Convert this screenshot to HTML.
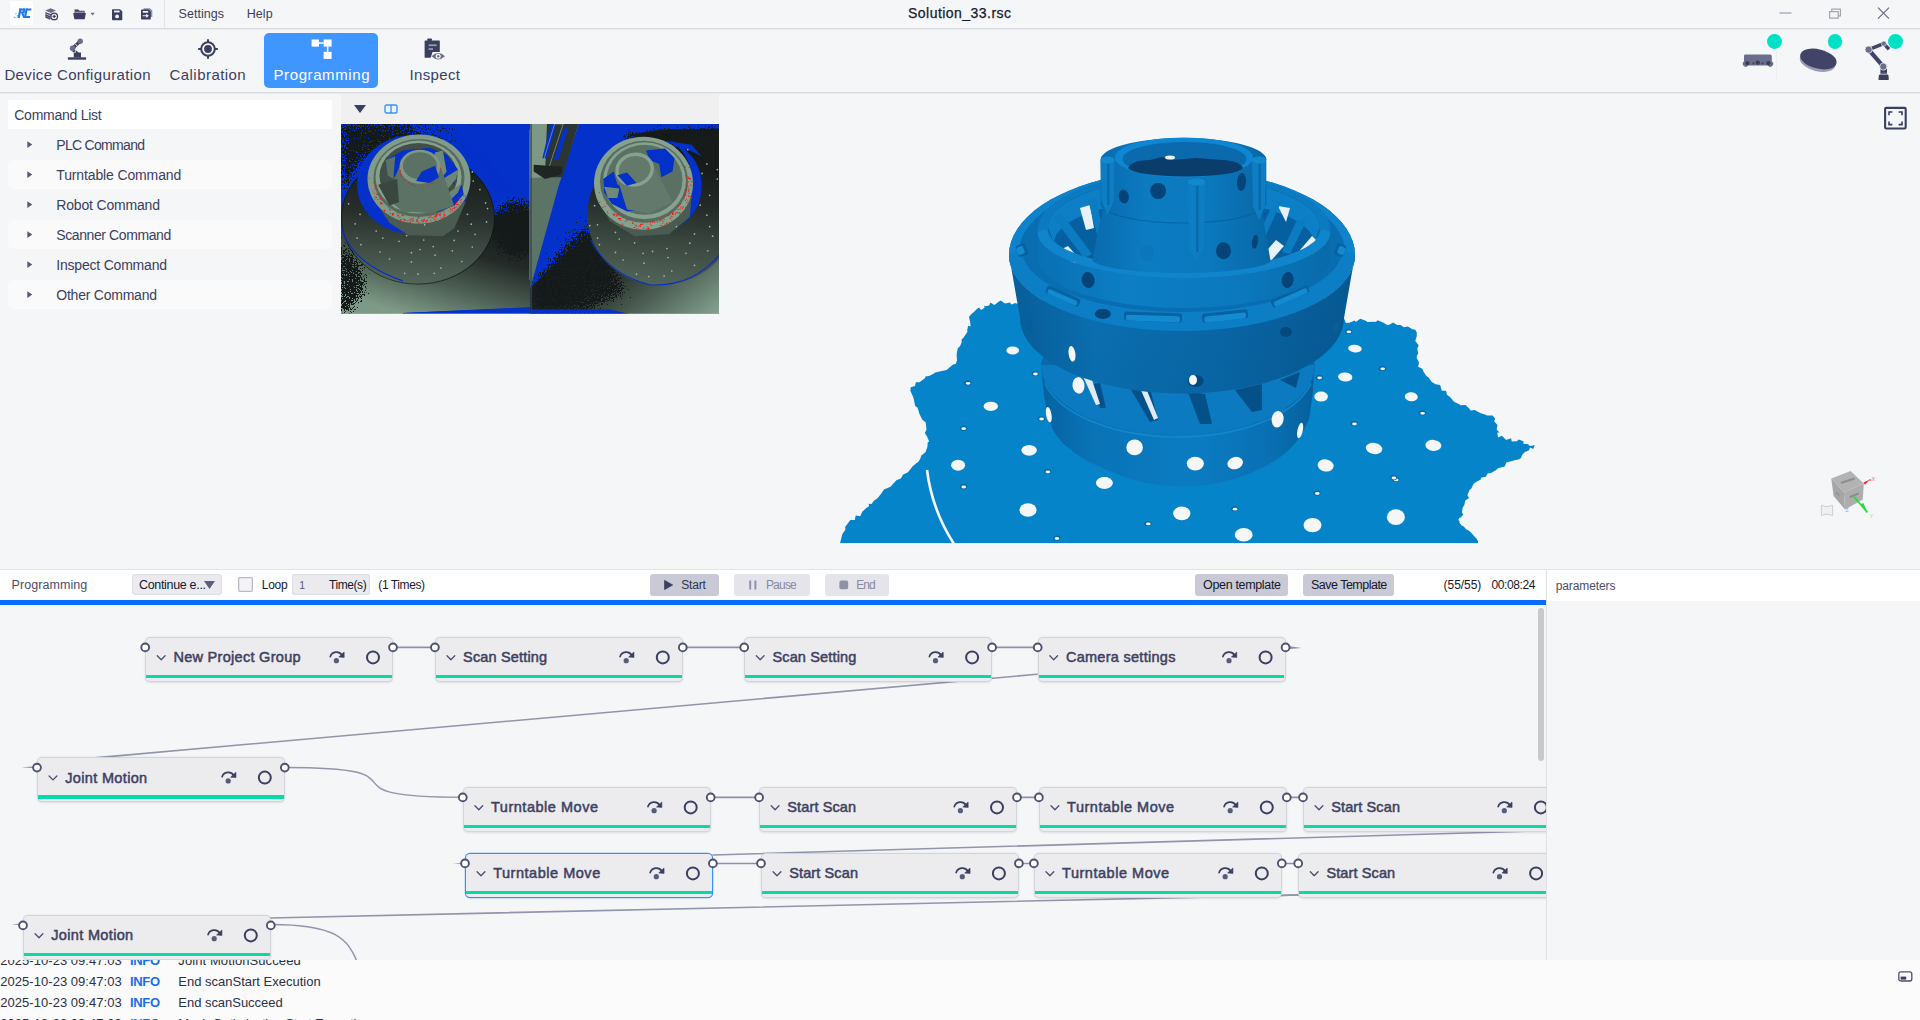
<!DOCTYPE html>
<html><head><meta charset="utf-8"><title>Solution_33.rsc</title>
<style>
html,body{margin:0;padding:0;}
body{width:1920px;height:1020px;overflow:hidden;background:#f5f6f8;position:relative;font-family:"Liberation Sans",sans-serif;}
.t{position:absolute;white-space:nowrap;}
.r{position:absolute;}
svg{position:absolute;overflow:visible;}
</style></head><body>
<div class="r" style="left:0px;top:28px;width:1920px;height:1px;background:#dcdde3;"></div>
<div class="r" style="left:0px;top:29px;width:1920px;height:1px;background:#e9eaee;"></div>
<div class="r" style="left:164px;top:0px;width:1px;height:28px;background:#e2e3e8;"></div>
<div class="r" style="left:10px;top:1px;width:23px;height:24px;background:#ffffff;border-radius:2px;"></div>
<svg style="left:12.5px;top:8px" width="19" height="11" viewBox="0 0 19 11"><g fill="#1a7bf3"><path d="M4.6,10 H6.8 L8.6,0.6 H6.4 Z"/><path d="M6.4,0.6 H12.3 L11.9,2.5 H6 Z"/><path d="M10.3,0.6 H12.3 L11.5,5.3 H9.5 Z"/><path d="M7.2,3.6 H11.6 L11.3,5.3 H6.9 Z"/><path d="M8.2,5.2 H10.4 L12.6,10 H10.4 Z"/><path d="M13.2,0.6 H18.5 L18.2,2.5 H12.9 Z"/><path d="M12.6,0.6 H14.8 L13,10 H10.8 Z"/><path d="M11,8.1 H17.2 L16.9,10 H10.6 Z"/></g><path d="M0.8,8.2 L3.6,10 H0.6 Z M2.4,5 L4.6,5.6 L2,6.6 Z" fill="#9fb4d6"/><path d="M3.6,7 L5.2,7.4 L4.4,9 Z" fill="#5b9bf2"/></svg>
<svg style="left:45px;top:7.6px" width="13" height="12" viewBox="0 0 13 12"><path d="M5.6,0.3 L11,2.6 L5.6,5 L0.3,2.6 Z" fill="#6b6e8a"/><path d="M0.3,4.6 L5.6,7 L7,6.3 M0.3,6.8 L5.6,9.2 M0.3,8.8 L5.3,11" fill="none" stroke="#4a4e6c" stroke-width="1.5"/><circle cx="9.2" cy="8.4" r="3.3" fill="#f5f6f8" stroke="#3b3f5f" stroke-width="1.3"/><path d="M9.2,6.8 V10 M7.6,8.4 H10.8" stroke="#3b3f5f" stroke-width="1.2"/></svg>
<svg style="left:73.3px;top:8.6px" width="23" height="11" viewBox="0 0 23 11"><path d="M1.6,0.6 H5.2 L6.4,1.8 H11.6 V4 H1.6 Z" fill="#3b3f5f"/><path d="M2.2,2.6 H11 V4 H2.2 Z" fill="#8f92aa"/><path d="M0.2,3.9 H12.9 L11.7,10.3 H1.4 Z" fill="#3b3f5f"/><path d="M17.4,3.8 H21.8 L19.6,6.4 Z" fill="#6d7089"/></svg>
<svg style="left:111.8px;top:8.5px" width="11" height="11.5" viewBox="0 0 11 11.5"><path d="M0.8,0.2 H8 L10.3,2.5 V10.4 Q10.3,11.2 9.5,11.2 H0.8 Q0,11.2 0,10.4 V1 Q0,0.2 0.8,0.2 Z" fill="#3b3f5f"/><rect x="2" y="1.6" width="5.6" height="1.8" fill="#f5f6f8"/><circle cx="5.1" cy="7.4" r="1.9" fill="#f5f6f8"/></svg>
<svg style="left:140.6px;top:8px" width="12" height="12" viewBox="0 0 12 12"><path d="M2.6,0.2 H9 L11.3,2.4 V9 H2.6 Z" fill="#8f92aa"/><path d="M0.8,1.6 H7.6 L9.8,3.8 V10.8 Q9.8,11.6 9,11.6 H0.8 Q0,11.6 0,10.8 V2.4 Q0,1.6 0.8,1.6 Z" fill="#3b3f5f"/><rect x="1.8" y="3" width="5.4" height="1.7" fill="#f5f6f8"/><path d="M1.6,7.8 H6.4 M5.2,6.3 L7,7.8 L5.2,9.3" fill="none" stroke="#f5f6f8" stroke-width="1.1"/></svg>
<svg style="left:1775px;top:4px" width="130" height="20" viewBox="0 0 130 20"><path d="M4.5,9 H16.5" stroke="#a3a5b3" stroke-width="1.3"/><path d="M54.6,7.6 H63.2 V14.2 H54.6 Z M56.8,7.6 V5.2 H65.4 V11.8 H63.2" fill="none" stroke="#a3a5b3" stroke-width="1.2"/><path d="M103,3.6 L114,14.6 M114,3.6 L103,14.6" stroke="#6d7086" stroke-width="1.3"/></svg>
<div class="t" style="left:178.50px;top:4.67px;font-size:12.5px;line-height:18px;letter-spacing:0.048px;color:#3b3f5f;">Settings</div>
<div class="t" style="left:246.70px;top:4.67px;font-size:12.5px;line-height:18px;letter-spacing:0.097px;color:#3b3f5f;">Help</div>
<div class="t" style="left:908.00px;top:3.15px;font-size:14px;line-height:20px;letter-spacing:0.464px;color:#17192f;-webkit-text-stroke:0.25px #17192f;">Solution_33.rsc</div>
<div class="r" style="left:0px;top:92px;width:1920px;height:1px;background:#dadbe1;"></div>
<div class="r" style="left:0px;top:93px;width:1920px;height:1px;background:#e8e9ed;"></div>
<div class="r" style="left:264px;top:33px;width:114px;height:55px;background:#4096ff;border-radius:5px;"></div>
<div class="t" style="left:4.40px;top:64.30px;font-size:15px;line-height:21px;letter-spacing:0.361px;color:#3b3f5f;">Device Configuration</div>
<div class="t" style="left:169.50px;top:64.30px;font-size:15px;line-height:21px;letter-spacing:0.450px;color:#3b3f5f;">Calibration</div>
<div class="t" style="left:273.50px;top:64.30px;font-size:15px;line-height:21px;letter-spacing:0.597px;color:#ffffff;">Programming</div>
<div class="t" style="left:409.50px;top:64.30px;font-size:15px;line-height:21px;letter-spacing:0.356px;color:#3b3f5f;">Inspect</div>
<svg style="left:66px;top:37px" width="22" height="24" viewBox="0 0 22 24"><path d="M1.9,21.5 H20.1" stroke="#3b3f5f" stroke-width="2.4"/><path d="M7.8,15.4 H10 V13.6 L12.6,15.4 H15 V20.4 H7.8 Z" fill="#3b3f5f"/><path d="M6.6,11.2 L14.2,4.2" stroke="#3b3f5f" stroke-width="3.2"/><path d="M8.4,14.8 L6.6,11.2" stroke="#3b3f5f" stroke-width="3"/><path d="M9.4,7 L11.4,9.2" stroke="#f5f6f8" stroke-width="0.9"/><circle cx="6.6" cy="11.2" r="2.8" fill="#6a6d8b"/><circle cx="14.2" cy="4.25" r="2.7" fill="#6a6d8b"/></svg>
<svg style="left:197px;top:38px" width="22" height="22" viewBox="0 0 22 22"><circle cx="11" cy="11" r="6.8" fill="none" stroke="#3b3f5f" stroke-width="2"/><circle cx="11" cy="11" r="3.9" fill="#3b3f5f"/><path d="M11,1.2 V5 M11,17 V20.8 M1.2,11 H5 M17,11 H20.8" stroke="#3b3f5f" stroke-width="2"/></svg>
<svg style="left:311px;top:39px" width="21" height="20" viewBox="0 0 21 20"><g fill="#ffffff"><rect x="0.6" y="0.5" width="7.4" height="7.1"/><rect x="12.6" y="0.5" width="8" height="7.1"/><rect x="12.6" y="12.8" width="8" height="7.1"/><rect x="8" y="3.3" width="4.6" height="1.5"/><rect x="15.9" y="7.6" width="1.5" height="5.2"/></g></svg>
<svg style="left:424px;top:37.5px" width="22" height="23" viewBox="0 0 22 23"><rect x="3.2" y="0.5" width="4.8" height="2.4" rx="0.8" fill="#3b3f5f"/><path d="M1.2,2.4 H15.2 Q15.8,2.4 15.8,3 V14 H8.6 L6.6,19.8 H1.2 Q0.6,19.8 0.6,19.2 V3 Q0.6,2.4 1.2,2.4 Z" fill="#3b3f5f"/><rect x="4.6" y="6.4" width="8" height="1.7" fill="#9a9db5"/><rect x="4.6" y="10.2" width="4.4" height="1.7" fill="#9a9db5"/><path d="M7.4,18.2 Q14.2,11.6 21,18.2 Q14.2,24.6 7.4,18.2 Z" fill="#6d7089"/><circle cx="14.2" cy="18.2" r="2.5" fill="#f5f6f8"/><circle cx="14.2" cy="18.2" r="1.2" fill="#6d7089"/></svg>
<div class="r" style="left:1766.8999999999999px;top:34px;width:14.8px;height:14.8px;border-radius:50%;background:#00e2c6;"></div>
<div class="r" style="left:1827.5px;top:34px;width:14.8px;height:14.8px;border-radius:50%;background:#00e2c6;"></div>
<div class="r" style="left:1888.1px;top:34px;width:14.8px;height:14.8px;border-radius:50%;background:#00e2c6;"></div>
<svg style="left:1741.5px;top:53.5px" width="32" height="14" viewBox="0 0 32 14"><path d="M2.8,0.6 H28.2 Q29.8,0.6 29.8,2.2 V7.4 L31.2,8.6 V10.8 Q30,13.4 27.4,12.8 L25.6,11.6 H6.4 L4.6,12.8 Q2,13.4 0.8,10.8 V8.6 L2,7.4 V2.2 Q2,0.6 2.8,0.6 Z" fill="#6b6e8a"/><circle cx="5.4" cy="9.2" r="2.1" fill="#3b3f5f"/><circle cx="26.4" cy="9.2" r="2.1" fill="#3b3f5f"/><circle cx="15.8" cy="8.6" r="2.2" fill="#3b3f5f"/><rect x="10.6" y="8.4" width="1.8" height="1.8" fill="#3b3f5f"/><rect x="19.6" y="8.4" width="1.8" height="1.8" fill="#3b3f5f"/></svg>
<div class="r" style="left:1776px;top:52px;width:1px;height:28px;background:#eceef1;"></div>
<svg style="left:1796px;top:46px" width="44" height="28" viewBox="0 0 44 28"><ellipse cx="21.6" cy="15.6" rx="18.2" ry="9.6" fill="#9a9cb6" transform="rotate(14 21.6 15.6)"/><ellipse cx="22.4" cy="13" rx="18.6" ry="9.6" fill="#414468" transform="rotate(14 22.4 13)"/></svg>
<svg style="left:1862px;top:38px" width="34" height="44" viewBox="0 0 34 44"><path d="M16.8,37 H26.4 V42 H16.8 Z" fill="#3b3f5f"/><path d="M18.4,30.8 H25 V35 H18.4 Z" fill="#3b3f5f"/><rect x="18.4" y="34.6" width="6.6" height="1.4" fill="#6b6e8a"/><path d="M17.6,36.4 H25.8 L26.8,41.6 H16.4 Z" fill="#3b3f5f"/><path d="M6.6,11.6 L21.4,28.6" stroke="#41446a" stroke-width="4.2"/><path d="M6.6,11.6 L21.6,5.6" stroke="#41446a" stroke-width="3.6"/><path d="M22.4,6.4 L27,11.2" stroke="#41446a" stroke-width="3.4"/><circle cx="6.6" cy="11.6" r="3.6" fill="#6b6e8a" stroke="#f5f6f8" stroke-width="0.7"/><circle cx="21.8" cy="5.6" r="2.5" fill="#6b6e8a" stroke="#f5f6f8" stroke-width="0.6"/><circle cx="21.3" cy="28.6" r="3.6" fill="#6b6e8a" stroke="#f5f6f8" stroke-width="0.7"/></svg>
<svg style="left:1883px;top:106px" width="25" height="25" viewBox="0 0 25 25"><rect x="2.1" y="1.9" width="20.6" height="20.6" rx="1.2" fill="none" stroke="#3b3f5f" stroke-width="2.1"/><path d="M6,9.2 V6 H9.4 M15.6,6 H19 V9.2 M19,15.4 V18.6 H15.6 M9.4,18.6 H6 V15.4" fill="none" stroke="#3b3f5f" stroke-width="1.6"/></svg>
<svg style="left:1815px;top:465px" width="70" height="60" viewBox="0 0 70 60"><path d="M16.3,13.4 L35.6,6 L48.8,18.4 L29,27.4 Z" fill="#b3b3b3"/><path d="M16.3,13.4 L29,27.4 L30,44.6 L18.6,31 Z" fill="#a6a6a6"/><path d="M29,27.4 L48.8,18.4 L47.8,34.4 L30,44.6 Z" fill="#adadad"/><path d="M25.4,17 L39,12.6 L40,14.4 L26.4,19 Z" fill="#8f8f8f"/><path d="M34.6,31 L43.6,27.4 L43.6,29.4 L34.6,33.2 Z" fill="#8a8a8a"/><path d="M21.2,26.4 L24,29.4 L24.2,31.6 L21.4,28.8 Z" fill="#8f8f8f"/><path d="M48.4,17.4 L54.8,14.4 L50,19.8 Z" fill="#e2303a"/><path d="M54,15 H56.4" stroke="#e2303a" stroke-width="1"/><path d="M39,31.8 L52.4,47.4" stroke="#22dd3c" stroke-width="1.7"/><path d="M45,39.6 L48.4,38 L52,46.4 Z" fill="#22dd3c"/><path d="M6.4,40.4 Q8,40 9,41.4 H14.8 Q15.8,40 17.6,40.4 V50.4 Q15.8,50.8 14.8,49.4 H9 Q8,50.8 6.4,50.4 Z" fill="#f0f0f1" stroke="#c4c4c7" stroke-width="0.8"/></svg>
<div class="t" style="left:1871.80px;top:475.77px;font-size:5px;line-height:7px;letter-spacing:0.000px;color:#ee6a70;">X</div>
<div class="t" style="left:1869.80px;top:512.77px;font-size:5px;line-height:7px;letter-spacing:0.000px;color:#7fe38c;">Y</div>
<div class="t" style="left:1845.40px;top:506.77px;font-size:5px;line-height:7px;letter-spacing:0.000px;color:#9a9af5;">Z</div>
<div class="r" style="left:8px;top:100px;width:324px;height:29px;background:#ffffff;"></div>
<div class="t" style="left:14.25px;top:105.15px;font-size:14px;line-height:20px;letter-spacing:-0.250px;color:#3b3f5f;">Command List</div>
<div class="t" style="left:56.25px;top:135.15px;font-size:14px;line-height:20px;letter-spacing:-0.695px;color:#3b3f5f;">PLC Command</div>
<svg style="left:27.2px;top:141px" width="6" height="7.2" viewBox="0 0 6 7.2"><path d="M0.3 0.2 L5.3 3.6 L0.3 7 Z" fill="#575a76"/></svg>
<div class="r" style="left:8px;top:160px;width:324px;height:29px;background:#fafafb;border-radius:6px;"></div>
<div class="t" style="left:56.25px;top:165.15px;font-size:14px;line-height:20px;letter-spacing:-0.131px;color:#3b3f5f;">Turntable Command</div>
<svg style="left:27.2px;top:171px" width="6" height="7.2" viewBox="0 0 6 7.2"><path d="M0.3 0.2 L5.3 3.6 L0.3 7 Z" fill="#575a76"/></svg>
<div class="t" style="left:56.25px;top:195.15px;font-size:14px;line-height:20px;letter-spacing:-0.173px;color:#3b3f5f;">Robot Command</div>
<svg style="left:27.2px;top:201px" width="6" height="7.2" viewBox="0 0 6 7.2"><path d="M0.3 0.2 L5.3 3.6 L0.3 7 Z" fill="#575a76"/></svg>
<div class="r" style="left:8px;top:220px;width:324px;height:29px;background:#fafafb;border-radius:6px;"></div>
<div class="t" style="left:56.25px;top:225.15px;font-size:14px;line-height:20px;letter-spacing:-0.401px;color:#3b3f5f;">Scanner Command</div>
<svg style="left:27.2px;top:231px" width="6" height="7.2" viewBox="0 0 6 7.2"><path d="M0.3 0.2 L5.3 3.6 L0.3 7 Z" fill="#575a76"/></svg>
<div class="t" style="left:56.25px;top:255.15px;font-size:14px;line-height:20px;letter-spacing:-0.204px;color:#3b3f5f;">Inspect Command</div>
<svg style="left:27.2px;top:261px" width="6" height="7.2" viewBox="0 0 6 7.2"><path d="M0.3 0.2 L5.3 3.6 L0.3 7 Z" fill="#575a76"/></svg>
<div class="r" style="left:8px;top:280px;width:324px;height:29px;background:#fafafb;border-radius:6px;"></div>
<div class="t" style="left:56.25px;top:285.15px;font-size:14px;line-height:20px;letter-spacing:-0.228px;color:#3b3f5f;">Other Command</div>
<svg style="left:27.2px;top:291px" width="6" height="7.2" viewBox="0 0 6 7.2"><path d="M0.3 0.2 L5.3 3.6 L0.3 7 Z" fill="#575a76"/></svg>
<div class="r" style="left:341px;top:94px;width:378px;height:30px;background:#f0f0f1;"></div>
<svg style="left:354px;top:105px" width="12" height="8" viewBox="0 0 12 8"><path d="M0 0 H12 L6 8 Z" fill="#3b3f5f"/></svg>
<svg style="left:383.5px;top:104px" width="14" height="10" viewBox="0 0 14 10"><rect x="1" y="1" width="12" height="8" rx="1.5" fill="#eaf3ff" stroke="#3c92f7" stroke-width="1.4"/><path d="M7 1 V9" stroke="#3c92f7" stroke-width="1.4"/></svg>
<svg style="left:0;top:0" width="1920" height="330" viewBox="0 0 1920 330"><defs>
<clipPath id="cl"><rect x="341" y="124" width="189.4" height="189.4"/></clipPath>
<clipPath id="cr"><rect x="530.4" y="124" width="188.6" height="189.4"/></clipPath>
<filter id="spk" x="-5%" y="-5%" width="110%" height="110%" color-interpolation-filters="sRGB">
<feTurbulence type="fractalNoise" baseFrequency="0.75" numOctaves="2" seed="4" result="n"/>
<feColorMatrix in="n" type="matrix" values="0 0 0 0 0  0 0 0 0 0  0 0 0 0 0  1.6 0 0 0 -0.3" result="na"/>
<feComposite in="SourceGraphic" in2="na" operator="arithmetic" k1="0" k2="1" k3="1" k4="-1" result="m"/>
<feColorMatrix in="m" type="matrix" values="0 0 0 0 0.08  0 0 0 0 0.1  0 0 0 0 0.1  0 0 0 30 0"/>
</filter>
<filter id="spkb" x="-5%" y="-5%" width="110%" height="110%" color-interpolation-filters="sRGB">
<feTurbulence type="fractalNoise" baseFrequency="0.8" numOctaves="2" seed="9" result="n"/>
<feColorMatrix in="n" type="matrix" values="0 0 0 0 0  0 0 0 0 0  0 0 0 0 0  1.6 0 0 0 -0.3" result="na"/>
<feComposite in="SourceGraphic" in2="na" operator="arithmetic" k1="0" k2="1" k3="1" k4="-1" result="m"/>
<feColorMatrix in="m" type="matrix" values="0 0 0 0 0.016  0 0 0 0 0.19  0 0 0 0 0.79  0 0 0 30 0"/>
</filter>
<filter id="bl3"><feGaussianBlur stdDeviation="3"/></filter>
<filter id="bl6"><feGaussianBlur stdDeviation="6"/></filter>
<linearGradient id="gFloorL" x1="0.9" y1="0" x2="0.35" y2="1"><stop offset="0" stop-color="#111614"/><stop offset="0.4" stop-color="#222926"/><stop offset="0.72" stop-color="#4f6256"/><stop offset="1" stop-color="#7d9a86"/></linearGradient>
<linearGradient id="gDiscL" x1="0.5" y1="0" x2="0.45" y2="1"><stop offset="0" stop-color="#141917"/><stop offset="0.45" stop-color="#262d2a"/><stop offset="0.75" stop-color="#3f4d45"/><stop offset="1" stop-color="#53665a"/></linearGradient>
<linearGradient id="gFloorR" x1="0.1" y1="0.2" x2="1" y2="1"><stop offset="0" stop-color="#121715"/><stop offset="0.45" stop-color="#1e2422"/><stop offset="0.75" stop-color="#55695d"/><stop offset="1" stop-color="#86a490"/></linearGradient>
<linearGradient id="gDiscR" x1="0.6" y1="0" x2="0.5" y2="1"><stop offset="0" stop-color="#121715"/><stop offset="0.4" stop-color="#222926"/><stop offset="0.75" stop-color="#3f4d45"/><stop offset="1" stop-color="#52655a"/></linearGradient>
<radialGradient id="gPart" cx="0.45" cy="0.35" r="0.7"><stop offset="0" stop-color="#7a9584"/><stop offset="1" stop-color="#637c6d"/></radialGradient>
</defs><rect x="341" y="124" width="378" height="189.4" fill="#0431c9"/><g clip-path="url(#cl)"><polygon points="340.0,228.6 532.2,211.4 532.2,307.5 402.8,312.9 340.0,314.2" fill="url(#gFloorL)"/><g filter="url(#spk)"><ellipse cx="517.0" cy="228.6" rx="26" ry="30" fill="#000" opacity="0.85" filter="url(#bl6)"/></g><g filter="url(#spk)"><polygon points="340.0,122.0 402.8,122.0 473.2,133.4 439.0,148.6 362.8,160.1 340.0,201.9" fill="#000" opacity="0.78" filter="url(#bl6)"/></g><g filter="url(#spk)"><polygon points="336.2,240.0 357.1,255.2 368.5,285.7 351.4,314.2 336.2,314.2" fill="#000" opacity="0.75" filter="url(#bl6)"/></g><ellipse cx="418.0" cy="217.1" rx="76.5" ry="66" fill="url(#gDiscL)"/><ellipse cx="418.0" cy="218.1" rx="76.5" ry="66" fill="none" stroke="#0d1110" stroke-width="0.8" opacity="0.8"/><g filter="url(#spkb)"><polygon points="402.8,125.8 530.3,133.4 530.3,184.8 497.9,198.1 480.8,169.6 454.2,144.8 416.1,133.4" fill="#000" opacity="0.85" filter="url(#bl3)"/></g><polygon points="454.2,127.7 530.3,129.6 530.3,179.1 507.5,184.8 492.2,163.9 473.2,144.8" fill="#0431c9"/><ellipse cx="413" cy="184.5" rx="56" ry="49.5" fill="#0431c9"/><path d="M341.9,228.6 Q351.4,262.8 402.8,280.9" fill="none" stroke="#0431c9" stroke-width="1.2"/><polygon points="378.1,205.7 465.6,201.9 454.2,228.6 442.8,236.2 408.5,235.2 389.5,222.9" fill="#4a5b51"/><ellipse cx="419.0" cy="179.1" rx="51.5" ry="44.5" fill="#809b89"/><ellipse cx="419.0" cy="178.1" rx="45.5" ry="39" fill="#55695d"/><ellipse cx="418.5" cy="177.1" rx="43" ry="36.5" fill="#86a18e"/><ellipse cx="418.5" cy="176.1" rx="39" ry="33" fill="#414f47"/><polygon points="385.7,160.1 402.8,150.5 429.4,147.7 446.6,154.4 458.0,169.6 454.2,184.8 439.0,179.1 429.4,184.8 412.3,182.9 397.1,177.2 387.6,173.4" fill="#0431c9"/><polygon points="442.8,201.9 461.8,184.8 463.7,194.3 454.2,205.7 439.0,211.4 425.6,211.4" fill="#0431c9"/><polygon points="435.1,152.4 442.8,150.5 446.6,171.5 440.9,179.1 429.4,167.7" fill="#718b7a"/><polygon points="442.8,179.1 458.0,169.6 456.1,179.1 446.6,190.5" fill="#6c8575"/><polygon points="446.6,194.3 461.8,182.9 458.0,192.4 446.6,203.8" fill="#6c8575"/><polygon points="385.7,160.1 395.2,156.3 393.3,179.1 387.6,175.3" fill="#5c7365"/><polygon points="399.0,167.7 440.9,167.7 454.2,205.7 431.3,213.3 402.8,211.4 385.7,198.1" fill="#5b7264"/><ellipse cx="419.9" cy="166.7" rx="20.5" ry="17" fill="#7c9785"/><ellipse cx="419.9" cy="165.7" rx="17" ry="13.5" fill="#5a7163"/><polygon points="421.8,171.5 435.1,165.8 439.0,177.2 429.4,182.9 416.1,181.0" fill="#0431c9"/><polygon points="378.1,184.8 397.1,179.1 399.0,201.9 389.5,205.7" fill="#3a4640"/><g fill="#f01410"><rect x="416.5" y="220.3" width="1" height="1"/><rect x="408.9" y="219.6" width="1.4" height="1"/><rect x="392.5" y="215.2" width="1" height="0.8"/><rect x="460.6" y="202.4" width="0.8" height="1.2"/><rect x="396.5" y="212.7" width="1.4" height="0.8"/><rect x="458.9" y="197.3" width="0.8" height="1"/><rect x="433.8" y="218.5" width="0.8" height="1.2"/><rect x="436.3" y="213.9" width="1.4" height="1"/><rect x="422.8" y="220.2" width="0.8" height="1.2"/><rect x="443.6" y="215.9" width="0.8" height="0.8"/><rect x="402.8" y="215.0" width="1" height="1"/><rect x="457.4" y="197.5" width="0.8" height="0.8"/><rect x="375.2" y="184.7" width="1.4" height="1"/><rect x="421.0" y="220.4" width="1.4" height="1"/><rect x="431.8" y="217.3" width="1" height="0.8"/><rect x="456.3" y="206.4" width="1" height="1"/><rect x="451.3" y="209.5" width="0.8" height="1.2"/><rect x="380.4" y="202.0" width="1" height="1"/><rect x="396.7" y="215.7" width="0.8" height="0.8"/><rect x="418.1" y="217.0" width="1" height="1"/><rect x="457.5" y="198.4" width="0.8" height="0.8"/><rect x="397.4" y="214.7" width="1.4" height="1"/><rect x="378.1" y="194.9" width="1.4" height="0.8"/><rect x="434.9" y="215.8" width="1.4" height="0.8"/><rect x="453.6" y="208.2" width="1.4" height="1"/><rect x="372.6" y="190.5" width="0.8" height="0.8"/><rect x="465.2" y="197.2" width="1.4" height="1"/><rect x="443.4" y="216.5" width="1" height="1.2"/><rect x="452.4" y="210.0" width="0.8" height="1"/><rect x="401.4" y="219.4" width="1" height="0.8"/><rect x="374.4" y="185.9" width="1" height="1"/><rect x="417.6" y="217.3" width="1" height="1.2"/><rect x="401.6" y="214.7" width="1" height="1"/><rect x="389.8" y="212.8" width="0.8" height="1.2"/><rect x="383.7" y="210.5" width="1.4" height="0.8"/><rect x="412.3" y="221.0" width="0.8" height="0.8"/><rect x="416.5" y="219.1" width="1.4" height="1.2"/><rect x="430.5" y="219.9" width="1" height="0.8"/><rect x="373.6" y="192.6" width="1" height="1"/><rect x="399.0" y="216.9" width="1.4" height="0.8"/><rect x="425.5" y="221.1" width="1" height="1"/><rect x="463.3" y="195.3" width="0.8" height="1.2"/><rect x="458.6" y="204.6" width="1" height="1"/><rect x="373.8" y="188.5" width="1.4" height="0.8"/><rect x="407.2" y="220.3" width="1" height="1"/><rect x="448.6" y="210.5" width="0.8" height="0.8"/><rect x="425.9" y="220.1" width="0.8" height="0.8"/><rect x="410.1" y="221.4" width="1.4" height="0.8"/><rect x="373.3" y="182.3" width="1" height="1"/><rect x="439.2" y="214.2" width="1.4" height="1.2"/><rect x="411.1" y="218.3" width="1.4" height="1"/><rect x="435.1" y="219.7" width="1.4" height="0.8"/><rect x="389.3" y="209.3" width="1.4" height="1.2"/><rect x="460.8" y="193.1" width="0.8" height="1"/><rect x="443.2" y="211.7" width="1.4" height="0.8"/><rect x="417.3" y="220.8" width="1" height="0.8"/><rect x="389.1" y="208.4" width="0.8" height="1.2"/><rect x="449.8" y="208.3" width="1.4" height="1.2"/><rect x="409.4" y="222.3" width="1.4" height="0.8"/><rect x="461.6" y="202.5" width="0.8" height="1"/><rect x="416.4" y="220.7" width="1" height="1.2"/><rect x="400.0" y="219.1" width="1" height="1"/><rect x="434.6" y="220.8" width="1.4" height="1.2"/><rect x="454.7" y="203.5" width="0.8" height="1"/><rect x="404.6" y="220.0" width="1.4" height="0.8"/><rect x="429.9" y="216.3" width="1.4" height="1"/><rect x="380.1" y="202.4" width="0.8" height="1"/><rect x="379.7" y="198.3" width="0.8" height="1"/><rect x="454.0" y="206.9" width="1.4" height="1.2"/><rect x="418.2" y="222.3" width="1.4" height="0.8"/><rect x="381.2" y="203.2" width="1.4" height="1.2"/><rect x="392.5" y="213.2" width="1.4" height="1"/><rect x="435.2" y="216.8" width="1.4" height="0.8"/><rect x="435.5" y="215.1" width="1" height="1.2"/><rect x="410.5" y="218.8" width="0.8" height="1.2"/><rect x="426.9" y="219.7" width="1" height="1.2"/><rect x="377.2" y="199.3" width="1.4" height="0.8"/><rect x="460.7" y="199.0" width="1" height="1"/><rect x="443.5" y="214.0" width="1" height="1.2"/><rect x="434.0" y="215.9" width="1" height="0.8"/><rect x="383.5" y="210.5" width="0.8" height="0.8"/><rect x="443.8" y="214.0" width="1.4" height="0.8"/><rect x="384.1" y="210.1" width="1.4" height="1"/><rect x="375.4" y="196.9" width="1.4" height="1.2"/><rect x="392.5" y="213.3" width="1.4" height="1.2"/><rect x="374.5" y="199.3" width="1" height="0.8"/><rect x="448.9" y="214.7" width="0.8" height="0.8"/><rect x="453.1" y="203.7" width="1" height="1"/><rect x="403.9" y="219.2" width="1.4" height="1.2"/><rect x="380.3" y="198.1" width="1" height="1"/><rect x="456.8" y="203.8" width="1.4" height="1.2"/><rect x="373.7" y="196.5" width="0.8" height="0.8"/><rect x="412.9" y="217.7" width="0.8" height="0.8"/><rect x="368.5" y="177.6" width="0.8" height="0.8"/><rect x="433.5" y="217.8" width="1" height="0.8"/><rect x="398.7" y="212.7" width="0.8" height="0.8"/><rect x="422.6" y="219.0" width="0.8" height="1.2"/><rect x="452.4" y="208.2" width="0.8" height="1.2"/><rect x="401.8" y="215.2" width="1" height="1"/><rect x="438.4" y="213.8" width="0.8" height="1"/><rect x="454.3" y="204.8" width="1" height="1"/><rect x="380.8" y="202.4" width="0.8" height="1"/><rect x="435.7" y="214.7" width="1.4" height="1.2"/><rect x="436.4" y="215.3" width="0.8" height="1.2"/><rect x="459.8" y="200.0" width="0.8" height="1.2"/><rect x="455.9" y="203.8" width="0.8" height="1.2"/><rect x="455.9" y="202.1" width="1.4" height="0.8"/><rect x="379.7" y="203.6" width="1" height="1"/><rect x="439.5" y="214.9" width="1" height="1.2"/><rect x="399.8" y="219.8" width="1.4" height="0.8"/><rect x="403.2" y="218.8" width="1" height="0.8"/><rect x="426.1" y="222.5" width="1.4" height="1.2"/><rect x="397.8" y="215.2" width="1" height="1.2"/><rect x="423.8" y="218.6" width="1" height="1.2"/><rect x="442.2" y="217.8" width="1.4" height="1"/><rect x="464.6" y="195.4" width="1.4" height="0.8"/><rect x="422.6" y="221.0" width="1" height="1.2"/><rect x="424.1" y="220.3" width="1" height="0.8"/><rect x="379.6" y="198.6" width="1" height="0.8"/><rect x="444.4" y="215.1" width="1" height="1"/><rect x="458.6" y="205.4" width="0.8" height="0.8"/><rect x="428.2" y="217.0" width="1.4" height="1"/><rect x="391.8" y="214.0" width="1.4" height="1.2"/><rect x="379.0" y="196.7" width="0.8" height="0.8"/><rect x="412.6" y="219.7" width="1.4" height="1.2"/><rect x="376.4" y="193.8" width="1.4" height="1.2"/><rect x="387.7" y="207.3" width="0.8" height="0.8"/><rect x="450.0" y="211.5" width="0.8" height="1"/><rect x="440.3" y="212.3" width="0.8" height="1.2"/><rect x="440.5" y="217.3" width="0.8" height="1.2"/><rect x="421.8" y="185.6" width="0.9" height="0.9"/><rect x="439.8" y="167.9" width="0.9" height="0.9"/><rect x="400.0" y="171.3" width="0.9" height="0.9"/><rect x="407.8" y="182.4" width="0.9" height="0.9"/><rect x="409.4" y="183.3" width="0.9" height="0.9"/><rect x="399.9" y="170.3" width="0.9" height="0.9"/><rect x="433.3" y="181.6" width="0.9" height="0.9"/><rect x="401.0" y="174.9" width="0.9" height="0.9"/><rect x="401.1" y="175.2" width="0.9" height="0.9"/><rect x="404.5" y="179.9" width="0.9" height="0.9"/><rect x="431.6" y="182.7" width="0.9" height="0.9"/><rect x="431.3" y="182.9" width="0.9" height="0.9"/><rect x="414.8" y="185.2" width="0.9" height="0.9"/><rect x="428.0" y="184.4" width="0.9" height="0.9"/><rect x="400.5" y="173.5" width="0.9" height="0.9"/><rect x="410.9" y="184.0" width="0.9" height="0.9"/><rect x="401.7" y="176.4" width="0.9" height="0.9"/><rect x="400.4" y="173.4" width="0.9" height="0.9"/><rect x="439.9" y="170.7" width="0.9" height="0.9"/><rect x="412.5" y="184.6" width="0.9" height="0.9"/><rect x="399.9" y="170.2" width="0.9" height="0.9"/></g><g fill="#9fb7a5"><circle cx="348.6" cy="203.8" r="0.85"/><circle cx="360.0" cy="214.3" r="0.85"/><circle cx="355.2" cy="223.8" r="0.85"/><circle cx="357.1" cy="238.1" r="0.85"/><circle cx="360.9" cy="244.7" r="0.85"/><circle cx="376.2" cy="231.0" r="0.85"/><circle cx="382.8" cy="238.1" r="0.85"/><circle cx="380.0" cy="252.0" r="0.85"/><circle cx="389.5" cy="259.0" r="0.85"/><circle cx="399.0" cy="241.3" r="0.85"/><circle cx="411.4" cy="252.7" r="0.85"/><circle cx="411.4" cy="261.9" r="0.85"/><circle cx="404.7" cy="273.3" r="0.85"/><circle cx="418.0" cy="274.2" r="0.85"/><circle cx="419.9" cy="249.5" r="0.85"/><circle cx="423.7" cy="240.0" r="0.85"/><circle cx="433.2" cy="246.6" r="0.85"/><circle cx="435.1" cy="255.2" r="0.85"/><circle cx="440.9" cy="268.1" r="0.85"/><circle cx="434.2" cy="273.3" r="0.85"/><circle cx="452.3" cy="250.8" r="0.85"/><circle cx="454.2" cy="240.4" r="0.85"/><circle cx="461.8" cy="261.5" r="0.85"/><circle cx="472.3" cy="247.0" r="0.85"/><circle cx="458.0" cy="231.0" r="0.85"/><circle cx="475.1" cy="234.3" r="0.85"/><circle cx="471.3" cy="224.2" r="0.85"/><circle cx="467.5" cy="214.3" r="0.85"/><circle cx="486.5" cy="221.9" r="0.85"/><circle cx="487.5" cy="208.6" r="0.85"/><circle cx="485.6" cy="202.9" r="0.85"/><circle cx="479.9" cy="189.6" r="0.85"/><circle cx="473.2" cy="181.0" r="0.85"/><circle cx="472.3" cy="171.9" r="0.85"/><circle cx="406.6" cy="235.6" r="0.85"/><circle cx="424.7" cy="224.8" r="0.85"/></g><polygon points="402.8,313.1 532.2,307.0 532.2,314.2 402.8,314.2" fill="#0431c9"/><polygon points="529.2,129.6 532.2,129.6 532.2,279.9 529.2,279.9" fill="#5d7566"/></g><g clip-path="url(#cr)"><polygon points="590.8,236.2 720.2,179.1 720.2,314.2 528.0,314.2 528.0,289.5 547.0,272.3 566.1,253.3" fill="url(#gFloorR)"/><g filter="url(#spk)"><polygon points="590.8,221.0 607.9,255.2 627.0,293.3 585.1,312.3 531.8,310.4 533.7,281.8 548.9,262.8 568.0,240.0" fill="#000" opacity="0.8" filter="url(#bl6)"/></g><ellipse cx="661.2" cy="215.2" rx="74" ry="70" fill="url(#gDiscR)"/><path d="M590.8,240.0 Q607.9,274.2 649.8,284.7 Q691.7,287.6 719.2,255.2" fill="none" stroke="#0431c9" stroke-width="1.1"/><polygon points="627.0,135.3 661.2,129.6 720.2,128.7 720.2,179.1 691.7,144.8" fill="#171c1a"/><g filter="url(#spk)"><polygon points="617.4,133.4 720.2,125.8 720.2,137.2 634.6,144.8" fill="#000" opacity="0.7" filter="url(#bl3)"/></g><path d="M668.8,139.1 Q710.7,160.1 699.3,201.9 Q689.8,228.6 653.6,234.3 Q684.0,217.1 691.7,184.8 Q693.6,156.3 668.8,139.1 Z" fill="#0431c9"/><polygon points="600.3,203.8 691.7,194.3 689.8,217.1 668.8,234.3 634.6,236.2 609.8,221.0" fill="#4a5b51"/><ellipse cx="643.5" cy="183.3" rx="49.5" ry="46.5" fill="#86a18e"/><ellipse cx="644.0" cy="181.8" rx="44" ry="41" fill="#566b5e"/><ellipse cx="644.5" cy="180.8" rx="41.5" ry="38.5" fill="#86a18e"/><ellipse cx="644.5" cy="179.8" rx="38" ry="35" fill="#5a7062"/><polygon points="646.0,150.5 665.0,148.6 674.5,158.2 672.6,171.5 661.2,177.2 659.3,163.9 649.8,160.1" fill="#0431c9"/><polygon points="603.2,179.1 613.6,171.5 617.4,184.8 634.6,186.7 627.0,201.9 642.2,209.5 627.0,211.4 611.7,203.8 604.1,192.4" fill="#0431c9"/><polygon points="604.1,186.7 619.3,188.6 617.4,198.1 607.9,198.1" fill="#6f8978"/><polygon points="617.4,179.1 653.6,165.8 672.6,201.9 649.8,213.3 627.0,209.5" fill="#62796b"/><ellipse cx="634.6" cy="169.6" rx="19.5" ry="17" fill="#86a18e" transform="rotate(-15 634.6 169.6)"/><ellipse cx="634.6" cy="169.6" rx="16" ry="13.5" fill="#62796b" transform="rotate(-15 634.6 169.6)"/><polygon points="617.4,175.3 627.0,172.4 636.5,182.9 627.0,185.7" fill="#0431c9"/><g fill="#f01410"><rect x="688.0" y="195.5" width="0.8" height="1"/><rect x="614.4" y="213.7" width="1" height="1.2"/><rect x="606.1" y="203.4" width="1" height="0.8"/><rect x="674.8" y="212.6" width="0.8" height="1.2"/><rect x="647.9" y="227.6" width="1.4" height="1.2"/><rect x="685.0" y="188.8" width="1" height="0.8"/><rect x="683.3" y="194.6" width="1" height="0.8"/><rect x="633.7" y="226.9" width="1.4" height="1"/><rect x="617.2" y="213.8" width="1.4" height="0.8"/><rect x="690.5" y="184.4" width="0.8" height="1.2"/><rect x="688.7" y="196.0" width="1" height="1"/><rect x="678.6" y="213.3" width="0.8" height="1"/><rect x="660.0" y="225.1" width="1.4" height="0.8"/><rect x="671.3" y="219.6" width="0.8" height="1"/><rect x="635.8" y="225.2" width="0.8" height="1"/><rect x="599.4" y="201.8" width="0.8" height="1.2"/><rect x="672.3" y="212.6" width="1" height="1.2"/><rect x="685.4" y="206.7" width="1" height="1.2"/><rect x="684.7" y="189.1" width="1.4" height="1"/><rect x="606.6" y="200.9" width="0.8" height="1"/><rect x="684.8" y="194.4" width="1.4" height="1.2"/><rect x="684.2" y="195.2" width="0.8" height="1"/><rect x="637.5" y="228.5" width="1" height="1"/><rect x="602.2" y="206.8" width="1.4" height="0.8"/><rect x="659.2" y="220.8" width="0.8" height="1"/><rect x="663.7" y="219.0" width="0.8" height="1"/><rect x="687.1" y="186.2" width="1.4" height="0.8"/><rect x="635.8" y="228.6" width="1.4" height="0.8"/><rect x="690.7" y="185.5" width="0.8" height="0.8"/><rect x="688.0" y="177.6" width="1.4" height="1.2"/><rect x="650.9" y="225.1" width="0.8" height="1"/><rect x="689.1" y="191.8" width="1" height="0.8"/><rect x="685.3" y="169.3" width="1" height="1"/><rect x="677.9" y="205.5" width="1" height="1.2"/><rect x="625.2" y="220.8" width="0.8" height="1.2"/><rect x="671.7" y="216.0" width="0.8" height="1.2"/><rect x="666.6" y="222.7" width="1" height="0.8"/><rect x="679.5" y="203.7" width="1.4" height="0.8"/><rect x="619.1" y="219.3" width="0.8" height="0.8"/><rect x="671.9" y="212.4" width="1" height="1.2"/><rect x="662.3" y="222.9" width="1" height="0.8"/><rect x="689.2" y="178.1" width="1.4" height="1.2"/><rect x="685.7" y="189.2" width="1" height="1.2"/><rect x="627.5" y="219.7" width="0.8" height="1"/><rect x="668.3" y="214.8" width="1" height="1.2"/><rect x="686.3" y="183.6" width="1.4" height="1"/><rect x="661.2" y="225.6" width="1.4" height="1"/><rect x="640.2" y="224.1" width="0.8" height="1.2"/><rect x="599.2" y="192.0" width="0.8" height="1"/><rect x="680.6" y="206.5" width="0.8" height="1.2"/><rect x="677.3" y="208.9" width="1.4" height="0.8"/><rect x="685.2" y="200.1" width="0.8" height="1"/><rect x="640.2" y="225.6" width="0.8" height="1.2"/><rect x="646.9" y="222.0" width="0.8" height="0.8"/><rect x="686.0" y="198.9" width="1" height="0.8"/><rect x="692.3" y="181.3" width="1.4" height="1.2"/><rect x="649.9" y="221.9" width="0.8" height="1.2"/><rect x="691.1" y="181.2" width="1" height="0.8"/><rect x="619.4" y="217.9" width="1.4" height="1.2"/><rect x="612.7" y="213.7" width="1.4" height="0.8"/><rect x="682.0" y="207.6" width="1" height="1.2"/><rect x="643.3" y="227.8" width="0.8" height="1"/><rect x="660.9" y="219.4" width="1.4" height="1"/><rect x="688.4" y="188.7" width="1.4" height="1"/><rect x="615.7" y="215.6" width="0.8" height="1"/><rect x="679.7" y="213.2" width="1.4" height="1"/><rect x="607.4" y="212.8" width="1" height="0.8"/><rect x="647.7" y="228.4" width="1.4" height="1.2"/><rect x="668.7" y="221.9" width="0.8" height="1"/><rect x="621.9" y="223.7" width="1.4" height="1"/><rect x="620.5" y="218.0" width="0.8" height="0.8"/><rect x="688.1" y="181.5" width="1" height="0.8"/><rect x="659.8" y="219.6" width="1.4" height="1"/><rect x="675.1" y="214.0" width="0.8" height="0.8"/><rect x="634.6" y="224.2" width="0.8" height="0.8"/><rect x="653.8" y="221.7" width="1.4" height="1"/><rect x="681.9" y="165.0" width="1" height="0.8"/><rect x="670.8" y="215.6" width="0.8" height="1"/><rect x="688.6" y="167.2" width="1" height="0.8"/><rect x="676.3" y="212.1" width="1.4" height="1.2"/><rect x="688.4" y="193.0" width="0.8" height="1.2"/><rect x="690.1" y="178.7" width="1" height="1"/><rect x="626.2" y="219.4" width="1" height="1"/><rect x="685.6" y="175.3" width="1.4" height="1.2"/><rect x="685.2" y="191.5" width="1.4" height="1"/><rect x="604.6" y="206.0" width="1" height="0.8"/><rect x="632.2" y="222.6" width="0.8" height="1"/><rect x="652.1" y="221.4" width="1" height="1.2"/><rect x="687.3" y="200.5" width="1" height="0.8"/><rect x="683.8" y="198.3" width="0.8" height="0.8"/><rect x="656.7" y="221.3" width="1.4" height="1"/><rect x="679.6" y="208.4" width="1" height="1.2"/><rect x="620.6" y="220.0" width="0.8" height="0.8"/><rect x="641.0" y="223.6" width="1" height="1.2"/><rect x="616.1" y="214.4" width="0.8" height="1.2"/><rect x="641.7" y="223.8" width="1.4" height="0.8"/><rect x="646.5" y="228.2" width="0.8" height="1.2"/><rect x="684.8" y="166.4" width="1" height="1.2"/><rect x="686.5" y="202.1" width="0.8" height="1.2"/><rect x="635.8" y="225.6" width="1.4" height="0.8"/><rect x="618.0" y="218.1" width="1.4" height="0.8"/><rect x="672.3" y="213.4" width="1.4" height="1.2"/><rect x="617.4" y="213.8" width="1" height="1.2"/><rect x="690.4" y="195.8" width="1" height="1.2"/><rect x="622.5" y="216.8" width="1.4" height="0.8"/><rect x="688.5" y="176.7" width="0.8" height="0.8"/><rect x="640.3" y="224.0" width="0.8" height="1"/><rect x="664.5" y="224.3" width="1" height="1.2"/><rect x="684.2" y="194.4" width="0.8" height="1.2"/><rect x="678.7" y="212.0" width="1.4" height="0.8"/><rect x="662.5" y="220.8" width="1" height="1"/><rect x="617.3" y="215.1" width="0.8" height="1.2"/><rect x="613.3" y="214.5" width="1.4" height="1"/><rect x="618.8" y="218.4" width="1.4" height="1.2"/><rect x="687.9" y="189.8" width="1" height="0.8"/><rect x="638.8" y="225.5" width="1.4" height="1"/><rect x="647.3" y="226.6" width="0.8" height="1"/><rect x="665.9" y="223.0" width="1" height="1.2"/><rect x="631.9" y="222.7" width="1" height="0.8"/><rect x="688.0" y="190.8" width="0.8" height="1"/><rect x="669.7" y="217.5" width="1.4" height="1.2"/><rect x="649.9" y="223.8" width="1" height="0.8"/><rect x="663.4" y="218.3" width="1" height="0.8"/><rect x="687.3" y="178.5" width="0.8" height="0.8"/><rect x="607.0" y="211.1" width="0.8" height="1.2"/><rect x="682.9" y="206.4" width="0.8" height="1.2"/><rect x="687.4" y="176.6" width="0.8" height="1"/><rect x="672.3" y="214.2" width="1" height="0.8"/><rect x="687.7" y="186.5" width="0.8" height="1"/><rect x="632.6" y="222.4" width="1" height="1"/><rect x="613.3" y="214.5" width="1.4" height="1"/></g><g fill="#9fb7a5"><circle cx="594.6" cy="205.7" r="0.85"/><circle cx="589.8" cy="225.7" r="0.85"/><circle cx="597.5" cy="224.8" r="0.85"/><circle cx="597.5" cy="238.1" r="0.85"/><circle cx="599.4" cy="244.7" r="0.85"/><circle cx="615.5" cy="232.4" r="0.85"/><circle cx="619.3" cy="239.0" r="0.85"/><circle cx="615.5" cy="252.4" r="0.85"/><circle cx="623.1" cy="260.0" r="0.85"/><circle cx="634.6" cy="242.8" r="0.85"/><circle cx="643.1" cy="253.3" r="0.85"/><circle cx="644.1" cy="263.2" r="0.85"/><circle cx="636.5" cy="274.2" r="0.85"/><circle cx="648.8" cy="276.5" r="0.85"/><circle cx="652.6" cy="251.4" r="0.85"/><circle cx="664.1" cy="276.1" r="0.85"/><circle cx="671.7" cy="271.0" r="0.85"/><circle cx="667.9" cy="257.5" r="0.85"/><circle cx="666.9" cy="248.5" r="0.85"/><circle cx="685.9" cy="253.3" r="0.85"/><circle cx="689.8" cy="243.2" r="0.85"/><circle cx="694.5" cy="233.9" r="0.85"/><circle cx="694.5" cy="265.3" r="0.85"/><circle cx="707.8" cy="250.8" r="0.85"/><circle cx="709.7" cy="226.7" r="0.85"/><circle cx="706.9" cy="215.2" r="0.85"/><circle cx="700.2" cy="205.2" r="0.85"/><circle cx="709.7" cy="195.3" r="0.85"/><circle cx="702.1" cy="173.4" r="0.85"/><circle cx="706.9" cy="163.9" r="0.85"/><circle cx="717.3" cy="169.6" r="0.85"/><circle cx="717.3" cy="179.1" r="0.85"/><circle cx="687.8" cy="149.6" r="0.85"/><circle cx="712.6" cy="236.2" r="0.85"/><circle cx="676.4" cy="226.7" r="0.85"/></g><polygon points="528.0,122.0 579.4,122.0 558.4,186.7 529.9,289.5 528.0,289.5" fill="#5b7465"/><polygon points="529.9,123.9 547.0,123.9 545.1,177.2 529.9,178.1" fill="#7d9887"/><polygon points="547.0,123.9 578.4,123.9 562.3,177.2 545.1,177.2" fill="#2d3531"/><polygon points="550.8,123.9 556.5,123.9 547.0,158.2 542.3,158.2" fill="#0431c9"/><polygon points="563.2,129.6 568.9,125.8 558.4,160.1 553.7,160.1" fill="#0431c9"/><polygon points="554.6,123.9 563.2,123.9 548.9,167.7 541.3,167.7" fill="none" stroke="#7d9887" stroke-width="0.8"/><polygon points="533.7,164.8 562.3,166.7 561.3,174.3 545.1,179.1 533.7,171.5" fill="#1e2522"/><polygon points="528.0,309.4 609.8,309.4 630.8,314.2 528.0,314.2" fill="#0431c9"/><rect x="530.4" y="124" width="1.3" height="190" fill="#3a4640"/></g></svg>
<svg style="left:0;top:0" width="1920" height="560" viewBox="0 0 1920 560"><g clip-path="url(#mclip)"><defs>
<clipPath id="mclip"><rect x="820" y="120" width="740" height="423.3"/></clipPath>
<linearGradient id="gBase" x1="0" x2="1" y1="0" y2="0"><stop offset="0" stop-color="#0661a0"/><stop offset="0.18" stop-color="#0973b6"/><stop offset="0.55" stop-color="#0b7cc2"/><stop offset="0.85" stop-color="#096fb2"/><stop offset="1" stop-color="#065e9b"/></linearGradient>
<linearGradient id="gRing" x1="0" x2="1" y1="0" y2="0"><stop offset="0" stop-color="#075f9c"/><stop offset="0.25" stop-color="#0a72b5"/><stop offset="0.6" stop-color="#0969aa"/><stop offset="1" stop-color="#065a95"/></linearGradient>
<linearGradient id="gRing2" x1="0" x2="1" y1="0" y2="0"><stop offset="0" stop-color="#0970b4"/><stop offset="0.3" stop-color="#0d7ec4"/><stop offset="0.7" stop-color="#0b78bd"/><stop offset="1" stop-color="#086aaa"/></linearGradient>
<linearGradient id="gCyl" x1="0" x2="1" y1="0" y2="0"><stop offset="0" stop-color="#096bae"/><stop offset="0.3" stop-color="#0c7cc2"/><stop offset="0.65" stop-color="#0b78bd"/><stop offset="1" stop-color="#0868a7"/></linearGradient>
<linearGradient id="gShade" x1="0" x2="0" y1="0" y2="1"><stop offset="0" stop-color="#000" stop-opacity="0"/><stop offset="1" stop-color="#001a33" stop-opacity="0.07"/></linearGradient>
<linearGradient id="gIn" x1="0" x2="0" y1="0" y2="1"><stop offset="0" stop-color="#055893"/><stop offset="1" stop-color="#096eb2"/></linearGradient>
</defs><path d="M840.0,543.3 L842.4,533.9 L844.8,530.6 L845.5,529.2 L845.1,527.0 L847.4,524.1 L850.3,520.0 L854.8,520.0 L855.7,515.5 L860.2,516.2 L862.2,511.7 L866.6,507.8 L868.8,506.5 L868.9,503.8 L871.6,504.1 L873.6,500.9 L877.8,497.9 L881.8,492.8 L883.9,489.6 L890.6,486.8 L892.5,484.4 L896.4,480.2 L900.9,478.6 L902.9,474.7 L908.0,472.3 L912.7,466.3 L917.1,462.6 L917.9,462.5 L920.4,458.6 L921.1,455.8 L925.6,451.9 L927.2,447.4 L927.5,445.8 L927.7,442.5 L929.1,441.4 L927.2,436.7 L924.9,432.9 L926.5,429.6 L925.7,422.5 L922.2,419.5 L919.5,413.9 L917.6,407.8 L915.2,405.9 L913.8,399.2 L913.1,396.9 L910.3,390.5 L910.7,387.2 L915.0,385.9 L915.8,382.3 L919.5,382.2 L925.2,377.9 L925.3,376.6 L929.1,376.0 L934.0,373.4 L935.2,372.4 L940.6,371.2 L946.6,370.1 L948.6,368.2 L953.0,364.6 L955.6,363.9 L957.0,360.6 L956.7,355.7 L956.7,353.6 L957.8,348.3 L960.1,345.9 L961.7,342.2 L961.6,339.6 L963.7,337.6 L964.0,337.1 L967.5,331.7 L967.2,330.1 L968.1,325.9 L970.8,326.3 L969.9,320.9 L969.0,316.7 L970.8,314.7 L973.3,311.9 L972.5,313.6 L976.8,308.9 L979.1,307.5 L981.1,310.0 L984.5,307.8 L984.2,305.6 L985.6,306.3 L989.1,305.5 L990.5,302.6 L994.1,305.0 L996.1,303.8 L997.5,302.8 L997.8,302.2 L1000.8,300.4 L1002.5,301.8 L1005.0,303.5 L1009.9,302.6 L1011.4,304.6 L1015.2,303.1 L1015.4,303.2 L1019.0,304.1 L1027.1,305.0 L1034.6,301.6 L1040.5,301.0 L1182.0,240.0 L1328.7,300.5 L1337.3,308.4 L1342.3,314.4 L1346.0,322.9 L1349.3,322.8 L1354.9,320.6 L1355.7,321.9 L1359.9,319.0 L1360.4,318.7 L1366.3,321.0 L1367.2,322.0 L1374.3,321.8 L1375.5,322.0 L1377.8,320.2 L1384.6,323.2 L1386.1,324.4 L1388.7,324.9 L1393.3,322.5 L1394.2,323.3 L1397.2,325.0 L1400.6,325.0 L1403.8,327.3 L1407.9,326.6 L1412.4,329.3 L1415.4,329.7 L1416.1,331.4 L1416.7,332.1 L1416.8,336.0 L1415.3,340.9 L1416.3,342.2 L1418.7,345.2 L1417.3,348.7 L1418.2,353.4 L1416.7,356.2 L1416.9,358.4 L1419.1,362.6 L1418.1,366.8 L1422.3,368.7 L1423.7,372.0 L1426.0,375.6 L1428.8,377.8 L1431.8,382.1 L1435.6,384.2 L1440.1,385.0 L1441.8,390.8 L1446.1,390.8 L1446.9,394.8 L1450.1,397.0 L1454.0,401.7 L1459.7,404.4 L1460.3,405.3 L1465.5,404.9 L1469.9,409.3 L1470.4,410.5 L1474.7,410.0 L1480.3,413.0 L1480.2,413.0 L1485.0,414.5 L1487.1,415.5 L1492.6,415.6 L1495.3,418.7 L1494.1,421.2 L1497.5,425.0 L1496.6,429.6 L1499.7,432.8 L1497.3,432.6 L1498.0,437.4 L1502.0,435.8 L1506.1,439.9 L1511.0,438.2 L1511.8,441.4 L1516.9,441.2 L1518.7,439.6 L1523.4,441.3 L1523.5,444.1 L1528.4,444.0 L1528.5,445.3 L1530.8,446.1 L1534.8,444.9 L1533.2,449.0 L1530.0,447.6 L1529.1,450.2 L1524.9,452.1 L1522.2,454.8 L1521.0,458.0 L1519.2,459.2 L1514.6,460.2 L1510.5,461.5 L1506.3,462.6 L1504.7,466.5 L1499.0,467.9 L1498.8,467.7 L1495.4,470.4 L1491.0,473.1 L1487.6,473.4 L1485.8,476.8 L1481.4,477.4 L1480.5,479.7 L1476.9,481.4 L1473.6,483.8 L1471.1,488.9 L1469.8,489.5 L1467.4,495.0 L1469.0,498.3 L1465.4,500.2 L1464.3,504.9 L1462.6,507.7 L1462.0,512.9 L1463.5,514.2 L1460.2,518.0 L1459.8,517.6 L1458.2,520.0 L1461.7,522.9 L1462.6,525.4 L1464.4,527.2 L1466.3,529.6 L1468.1,530.0 L1471.4,533.1 L1474.2,536.2 L1476.7,538.7 L1478.2,541.4 L1478.0,543.3 Z" fill="#0684ca"/><path d="M927,470 Q932,510 954,544" fill="none" stroke="#f5f6f8" stroke-width="2.6"/><path d="M1459,522 l5,-3 l3,5 l-5,2 Z" fill="#f5f6f8"/><ellipse cx="1012.7" cy="350.4" rx="6.3" ry="4" fill="#f5f6f8" transform="rotate(0 1012.7 350.4)"/><ellipse cx="990.8" cy="406.3" rx="7.2" ry="4.6" fill="#f5f6f8" transform="rotate(0 990.8 406.3)"/><ellipse cx="1029.1" cy="450.3" rx="7.7" ry="5.4" fill="#f5f6f8" transform="rotate(0 1029.1 450.3)"/><ellipse cx="1028" cy="510" rx="8.6" ry="6.8" fill="#f5f6f8" transform="rotate(0 1028 510)"/><ellipse cx="1104.4" cy="482.8" rx="8.3" ry="5.9" fill="#f5f6f8" transform="rotate(0 1104.4 482.8)"/><ellipse cx="1134.6" cy="447.4" rx="8.3" ry="7.9" fill="#f5f6f8" transform="rotate(0 1134.6 447.4)"/><ellipse cx="1195.3" cy="463.6" rx="8.6" ry="6.8" fill="#f5f6f8" transform="rotate(0 1195.3 463.6)"/><ellipse cx="1235.2" cy="463.1" rx="7.9" ry="6.1" fill="#f5f6f8" transform="rotate(-15 1235.2 463.1)"/><ellipse cx="1181.8" cy="513.4" rx="8.6" ry="6.8" fill="#f5f6f8" transform="rotate(0 1181.8 513.4)"/><ellipse cx="1243.7" cy="534.8" rx="9" ry="6.8" fill="#f5f6f8" transform="rotate(0 1243.7 534.8)"/><ellipse cx="1312.5" cy="525.1" rx="9" ry="7.2" fill="#f5f6f8" transform="rotate(0 1312.5 525.1)"/><ellipse cx="1325.6" cy="465.4" rx="8.1" ry="6.1" fill="#f5f6f8" transform="rotate(10 1325.6 465.4)"/><ellipse cx="1374" cy="448.5" rx="8.3" ry="5.6" fill="#f5f6f8" transform="rotate(8 1374 448.5)"/><ellipse cx="1321.1" cy="396.6" rx="6.8" ry="5" fill="#f5f6f8" transform="rotate(0 1321.1 396.6)"/><ellipse cx="1345.2" cy="377" rx="7.2" ry="4.5" fill="#f5f6f8" transform="rotate(5 1345.2 377)"/><ellipse cx="1354.9" cy="348.6" rx="6.8" ry="3.8" fill="#f5f6f8" transform="rotate(5 1354.9 348.6)"/><ellipse cx="1395.9" cy="517.2" rx="9" ry="7.9" fill="#f5f6f8" transform="rotate(0 1395.9 517.2)"/><ellipse cx="958.1" cy="465.2" rx="7" ry="5.5" fill="#f5f6f8" transform="rotate(0 958.1 465.2)"/><ellipse cx="1411.3" cy="396.8" rx="6.5" ry="4.5" fill="#f5f6f8" transform="rotate(5 1411.3 396.8)"/><ellipse cx="1433.4" cy="445.4" rx="8" ry="5.5" fill="#f5f6f8" transform="rotate(5 1433.4 445.4)"/><ellipse cx="1047.6" cy="471.6" rx="3.6" ry="2.6" fill="#0667aa"/><ellipse cx="1047.8999999999999" cy="472" rx="2.4" ry="1.4" fill="#f5f6f8"/><ellipse cx="1148" cy="523.5" rx="3.6" ry="2.6" fill="#0667aa"/><ellipse cx="1148.3" cy="523.9" rx="2.4" ry="1.4" fill="#f5f6f8"/><ellipse cx="1056.6" cy="538.1" rx="3.6" ry="2.6" fill="#0667aa"/><ellipse cx="1056.8999999999999" cy="538.5" rx="2.4" ry="1.4" fill="#f5f6f8"/><ellipse cx="1234.7" cy="508.8" rx="3.6" ry="2.6" fill="#0667aa"/><ellipse cx="1235.0" cy="509.2" rx="2.4" ry="1.4" fill="#f5f6f8"/><ellipse cx="1317" cy="493.1" rx="3.6" ry="2.6" fill="#0667aa"/><ellipse cx="1317.3" cy="493.5" rx="2.4" ry="1.4" fill="#f5f6f8"/><ellipse cx="1354.2" cy="423.6" rx="3.6" ry="2.6" fill="#0667aa"/><ellipse cx="1354.5" cy="424" rx="2.4" ry="1.4" fill="#f5f6f8"/><ellipse cx="1382.4" cy="368.40000000000003" rx="3.6" ry="2.6" fill="#0667aa"/><ellipse cx="1382.7" cy="368.8" rx="2.4" ry="1.4" fill="#f5f6f8"/><ellipse cx="1395.9" cy="479.5" rx="3.6" ry="2.6" fill="#0667aa"/><ellipse cx="1396.2" cy="479.9" rx="2.4" ry="1.4" fill="#f5f6f8"/><ellipse cx="1035.2" cy="373.6" rx="3.6" ry="2.6" fill="#0667aa"/><ellipse cx="1035.5" cy="374" rx="2.4" ry="1.4" fill="#f5f6f8"/><ellipse cx="1041.3" cy="418.6" rx="3.6" ry="2.6" fill="#0667aa"/><ellipse cx="1041.6" cy="419" rx="2.4" ry="1.4" fill="#f5f6f8"/><ellipse cx="1319.3" cy="377.40000000000003" rx="3.6" ry="2.6" fill="#0667aa"/><ellipse cx="1319.6" cy="377.8" rx="2.4" ry="1.4" fill="#f5f6f8"/><ellipse cx="1348.6" cy="331.40000000000003" rx="3.6" ry="2.6" fill="#0667aa"/><ellipse cx="1348.8999999999999" cy="331.8" rx="2.4" ry="1.4" fill="#f5f6f8"/><ellipse cx="963.4" cy="428.3" rx="3.6" ry="2.6" fill="#0667aa"/><ellipse cx="963.6999999999999" cy="428.7" rx="2.4" ry="1.4" fill="#f5f6f8"/><ellipse cx="963.4" cy="486.6" rx="3.6" ry="2.6" fill="#0667aa"/><ellipse cx="963.6999999999999" cy="487" rx="2.4" ry="1.4" fill="#f5f6f8"/><ellipse cx="967.8" cy="382.90000000000003" rx="3.6" ry="2.6" fill="#0667aa"/><ellipse cx="968.0999999999999" cy="383.3" rx="2.4" ry="1.4" fill="#f5f6f8"/><ellipse cx="1422.3" cy="412.90000000000003" rx="3.6" ry="2.6" fill="#0667aa"/><ellipse cx="1422.6" cy="413.3" rx="2.4" ry="1.4" fill="#f5f6f8"/><ellipse cx="1393.6" cy="477.6" rx="3.6" ry="2.6" fill="#0667aa"/><ellipse cx="1393.8999999999999" cy="478" rx="2.4" ry="1.4" fill="#f5f6f8"/><path d="M1041.0,365.0 L1041.4,361.9 L1042.7,358.7 L1044.8,355.7 L1047.7,352.6 L1051.4,349.7 L1055.9,346.8 L1061.2,344.1 L1067.2,341.5 L1073.8,339.0 L1081.1,336.7 L1089.0,334.6 L1097.5,332.6 L1106.4,330.9 L1115.8,329.4 L1125.6,328.0 L1135.7,327.0 L1146.0,326.1 L1156.6,325.5 L1167.3,325.1 L1178.0,325.0 L1188.7,325.1 L1199.4,325.5 L1210.0,326.1 L1220.3,327.0 L1230.4,328.0 L1240.2,329.4 L1249.6,330.9 L1258.5,332.6 L1267.0,334.6 L1274.9,336.7 L1282.2,339.0 L1288.8,341.5 L1294.8,344.1 L1300.1,346.8 L1304.6,349.7 L1308.3,352.6 L1311.2,355.7 L1313.3,358.7 L1314.6,361.9 L1315.0,365.0 L1315.0,365.0 L1314.6,370.5 L1313.3,376.0 L1311.2,381.3 L1308.3,386.6 L1304.6,391.8 L1300.1,396.8 L1294.8,401.6 L1288.8,406.1 L1282.2,410.5 L1274.9,414.5 L1267.0,418.2 L1258.5,421.6 L1249.6,424.7 L1240.2,427.4 L1230.4,429.7 L1220.3,431.6 L1210.0,433.1 L1199.4,434.1 L1188.7,434.8 L1178.0,435.0 L1167.3,434.8 L1156.6,434.1 L1146.0,433.1 L1135.7,431.6 L1125.6,429.7 L1115.8,427.4 L1106.4,424.7 L1097.5,421.6 L1089.0,418.2 L1081.1,414.5 L1073.8,410.5 L1067.2,406.1 L1061.2,401.6 L1055.9,396.8 L1051.4,391.8 L1047.7,386.6 L1044.8,381.3 L1042.7,376.0 L1041.4,370.5 L1041.0,365.0 Z" fill="#086aad"/><path d="M1041.0,365.0 L1041.4,370.5 L1042.7,376.0 L1044.8,381.3 L1047.7,386.6 L1051.4,391.8 L1055.9,396.8 L1061.2,401.6 L1067.2,406.1 L1073.8,410.5 L1081.1,414.5 L1089.0,418.2 L1097.5,421.6 L1106.4,424.7 L1115.8,427.4 L1125.6,429.7 L1135.7,431.6 L1146.0,433.1 L1156.6,434.1 L1167.3,434.8 L1178.0,435.0 L1188.7,434.8 L1199.4,434.1 L1210.0,433.1 L1220.3,431.6 L1230.4,429.7 L1240.2,427.4 L1249.6,424.7 L1258.5,421.6 L1267.0,418.2 L1274.9,414.5 L1282.2,410.5 L1288.8,406.1 L1294.8,401.6 L1300.1,396.8 L1304.6,391.8 L1308.3,386.6 L1311.2,381.3 L1313.3,376.0 L1314.6,370.5 L1315.0,365.0 Z" fill="#0b7ac0"/><path d="M1130.0,388.0 L1150.0,388.0 L1158.0,420.0 L1150.0,422.0 Z" fill="#045189"/><path d="M1188.0,392.0 L1205.0,394.0 L1212.0,424.0 L1200.0,424.0 Z" fill="#045189"/><path d="M1235.0,390.0 L1262.0,384.0 L1262.0,410.0 L1252.0,412.0 Z" fill="#045189"/><path d="M1280.0,380.0 L1300.0,372.0 L1296.0,388.0 Z" fill="#045189"/><path d="M1092.0,384.0 L1100.0,383.0 L1106.0,408.0 L1100.0,408.0 Z" fill="#045189"/><path d="M1082.0,374.0 L1090.0,374.0 L1100.0,404.0 L1096.0,405.0 Z" fill="#dfeaf5"/><path d="M1140.0,388.0 L1146.0,388.0 L1158.0,418.0 L1154.0,420.0 Z" fill="#dfeaf5"/><path d="M1041.0,365.0 L1041.4,370.5 L1042.7,376.0 L1044.8,381.3 L1047.7,386.6 L1051.4,391.8 L1055.9,396.8 L1061.2,401.6 L1067.2,406.1 L1073.8,410.5 L1081.1,414.5 L1089.0,418.2 L1097.5,421.6 L1106.4,424.7 L1115.8,427.4 L1125.6,429.7 L1135.7,431.6 L1146.0,433.1 L1156.6,434.1 L1167.3,434.8 L1178.0,435.0 L1188.7,434.8 L1199.4,434.1 L1210.0,433.1 L1220.3,431.6 L1230.4,429.7 L1240.2,427.4 L1249.6,424.7 L1258.5,421.6 L1267.0,418.2 L1274.9,414.5 L1282.2,410.5 L1288.8,406.1 L1294.8,401.6 L1300.1,396.8 L1304.6,391.8 L1308.3,386.6 L1311.2,381.3 L1313.3,376.0 L1314.6,370.5 L1315.0,365.0 L1314.8,365.0 L1312.5,395.0 L1309.1,419.2 L1300.1,437.2 L1291.0,448.0 L1279.8,457.5 L1266.0,466.0 L1250.5,473.3 L1234.0,479.0 L1216.7,483.4 L1198.0,486.0 L1178.4,486.8 L1158.0,485.0 L1137.8,481.2 L1120.0,475.3 L1104.0,468.8 L1088.0,461.5 L1074.7,453.0 L1063.0,443.5 L1054.4,432.7 L1047.6,417.0 L1044.0,395.0 L1040.9,365.0 Z" fill="url(#gBase)"/><path d="M1044.8,383.3 L1047.7,388.6 L1051.4,393.8 L1055.9,398.8 L1061.2,403.6 L1067.2,408.1 L1073.8,412.5 L1081.1,416.5 L1089.0,420.2 L1097.5,423.6 L1106.4,426.7 L1115.8,429.4 L1125.6,431.7 L1135.7,433.6 L1146.0,435.1 L1156.6,436.1 L1167.3,436.8 L1178.0,437.0 L1188.7,436.8 L1199.4,436.1 L1210.0,435.1 L1220.3,433.6 L1230.4,431.7 L1240.2,429.4 L1249.6,426.7 L1258.5,423.6 L1267.0,420.2 L1274.9,416.5 L1282.2,412.5 L1288.8,408.1 L1294.8,403.6 L1300.1,398.8 L1304.6,393.8 L1308.3,388.6 L1311.2,383.3" fill="none" stroke="#148dd0" stroke-width="1.6" opacity="0.8"/><ellipse cx="1277.6" cy="419.2" rx="6" ry="8.3" fill="#f5f6f8" transform="rotate(8 1277.6 419.2)"/><ellipse cx="1078.5" cy="385.4" rx="6" ry="8.3" fill="#f5f6f8" transform="rotate(-5 1078.5 385.4)"/><ellipse cx="1300.1" cy="430.5" rx="2.7" ry="7.9" fill="#f5f6f8" transform="rotate(12 1300.1 430.5)"/><ellipse cx="1048.8" cy="414.7" rx="2.7" ry="7.9" fill="#f5f6f8" transform="rotate(-10 1048.8 414.7)"/><ellipse cx="1134.6" cy="447.4" rx="8.3" ry="7.9" fill="#f5f6f8" transform="rotate(0 1134.6 447.4)"/><ellipse cx="1195.3" cy="463.6" rx="8.6" ry="6.8" fill="#f5f6f8" transform="rotate(0 1195.3 463.6)"/><ellipse cx="1235.2" cy="463.1" rx="7.9" ry="6.1" fill="#f5f6f8" transform="rotate(-15 1235.2 463.1)"/><ellipse cx="1104.4" cy="482.8" rx="8.3" ry="5.9" fill="#f5f6f8" transform="rotate(0 1104.4 482.8)"/><path d="M1009.0,255.0 L1009.5,248.3 L1011.1,241.7 L1013.8,235.2 L1017.5,228.7 L1022.2,222.5 L1027.9,216.4 L1034.5,210.6 L1042.0,205.0 L1050.4,199.8 L1059.7,194.9 L1069.6,190.4 L1080.3,186.2 L1091.6,182.5 L1103.5,179.3 L1115.8,176.5 L1128.5,174.2 L1141.6,172.3 L1154.9,171.0 L1168.4,170.3 L1182.0,170.0 L1195.6,170.3 L1209.1,171.0 L1222.4,172.3 L1235.5,174.2 L1248.2,176.5 L1260.5,179.3 L1272.4,182.5 L1283.7,186.2 L1294.4,190.4 L1304.3,194.9 L1313.6,199.8 L1322.0,205.0 L1329.5,210.6 L1336.1,216.4 L1341.8,222.5 L1346.5,228.7 L1350.2,235.2 L1352.9,241.7 L1354.5,248.3 L1355.0,255.0 L1355.0,255.0 L1354.5,261.0 L1352.9,266.9 L1350.2,272.7 L1346.5,278.5 L1341.8,284.1 L1336.1,289.5 L1329.5,294.7 L1322.0,299.7 L1313.6,304.4 L1304.3,308.7 L1294.4,312.8 L1283.7,316.5 L1272.4,319.8 L1260.5,322.7 L1248.2,325.2 L1235.5,327.3 L1222.4,328.9 L1209.1,330.1 L1195.6,330.8 L1182.0,331.0 L1168.4,330.8 L1154.9,330.1 L1141.6,328.9 L1128.5,327.3 L1115.8,325.2 L1103.5,322.7 L1091.6,319.8 L1080.3,316.5 L1069.6,312.8 L1059.7,308.7 L1050.4,304.4 L1042.0,299.7 L1034.5,294.7 L1027.9,289.5 L1022.2,284.1 L1017.5,278.5 L1013.8,272.7 L1011.1,266.9 L1009.5,261.0 L1009.0,255.0 Z" fill="#096db1"/><path d="M1009.0,255.0 L1009.5,248.3 L1011.1,241.7 L1013.8,235.2 L1017.5,228.7 L1022.2,222.5 L1027.9,216.4 L1034.5,210.6 L1042.0,205.0 L1050.4,199.8 L1059.7,194.9 L1069.6,190.4 L1080.3,186.2 L1091.6,182.5 L1103.5,179.3 L1115.8,176.5 L1128.5,174.2 L1141.6,172.3 L1154.9,171.0 L1168.4,170.3 L1182.0,170.0 L1195.6,170.3 L1209.1,171.0 L1222.4,172.3 L1235.5,174.2 L1248.2,176.5 L1260.5,179.3 L1272.4,182.5 L1283.7,186.2 L1294.4,190.4 L1304.3,194.9 L1313.6,199.8 L1322.0,205.0 L1329.5,210.6 L1336.1,216.4 L1341.8,222.5 L1346.5,228.7 L1350.2,235.2 L1352.9,241.7 L1354.5,248.3 L1355.0,255.0 L1345.0,252.0 L1344.5,246.0 L1343.0,240.1 L1340.5,234.3 L1337.0,228.5 L1332.6,222.9 L1327.2,217.5 L1321.0,212.3 L1313.9,207.3 L1305.9,202.6 L1297.3,198.3 L1287.9,194.2 L1277.8,190.5 L1267.2,187.2 L1256.0,184.3 L1244.4,181.8 L1232.4,179.7 L1220.1,178.1 L1207.5,176.9 L1194.8,176.2 L1182.0,176.0 L1169.2,176.2 L1156.5,176.9 L1143.9,178.1 L1131.6,179.7 L1119.6,181.8 L1108.0,184.3 L1096.8,187.2 L1086.2,190.5 L1076.1,194.2 L1066.7,198.3 L1058.1,202.6 L1050.1,207.3 L1043.0,212.3 L1036.8,217.5 L1031.4,222.9 L1027.0,228.5 L1023.5,234.3 L1021.0,240.1 L1019.5,246.0 L1019.0,252.0 Z" fill="#0e83cc"/><path d="M1009.0,255.0 L1009.5,261.0 L1011.1,266.9 L1013.8,272.7 L1017.5,278.5 L1022.2,284.1 L1027.9,289.5 L1034.5,294.7 L1042.0,299.7 L1050.4,304.4 L1059.7,308.7 L1069.6,312.8 L1080.3,316.5 L1091.6,319.8 L1103.5,322.7 L1115.8,325.2 L1128.5,327.3 L1141.6,328.9 L1154.9,330.1 L1168.4,330.8 L1182.0,331.0 L1195.6,330.8 L1209.1,330.1 L1222.4,328.9 L1235.5,327.3 L1248.2,325.2 L1260.5,322.7 L1272.4,319.8 L1283.7,316.5 L1294.4,312.8 L1304.3,308.7 L1313.6,304.4 L1322.0,299.7 L1329.5,294.7 L1336.1,289.5 L1341.8,284.1 L1346.5,278.5 L1350.2,272.7 L1352.9,266.9 L1354.5,261.0 L1355.0,255.0 L1344.0,318.0 L1343.5,323.9 L1342.0,329.8 L1339.5,335.6 L1336.1,341.3 L1331.7,346.9 L1326.3,352.3 L1320.1,357.4 L1313.1,362.4 L1305.2,367.0 L1296.6,371.4 L1287.2,375.4 L1277.2,379.1 L1266.6,382.4 L1255.5,385.3 L1244.0,387.8 L1232.1,389.8 L1219.8,391.4 L1207.3,392.6 L1194.7,393.3 L1182.0,393.5 L1169.3,393.3 L1156.7,392.6 L1144.2,391.4 L1131.9,389.8 L1120.0,387.8 L1108.5,385.3 L1097.4,382.4 L1086.8,379.1 L1076.8,375.4 L1067.4,371.4 L1058.8,367.0 L1050.9,362.4 L1043.9,357.4 L1037.7,352.3 L1032.3,346.9 L1027.9,341.3 L1024.5,335.6 L1022.0,329.8 L1020.5,323.9 L1020.0,318.0 Z" fill="url(#gRing)"/><path d="M1009.0,255.0 L1009.5,261.0 L1011.1,266.9 L1013.8,272.7 L1017.5,278.5 L1022.2,284.1 L1027.9,289.5 L1034.5,294.7 L1042.0,299.7 L1050.4,304.4 L1059.7,308.7 L1069.6,312.8 L1080.3,316.5 L1091.6,319.8 L1103.5,322.7 L1115.8,325.2 L1128.5,327.3 L1141.6,328.9 L1154.9,330.1 L1168.4,330.8 L1182.0,331.0 L1195.6,330.8 L1209.1,330.1 L1222.4,328.9 L1235.5,327.3 L1248.2,325.2 L1260.5,322.7 L1272.4,319.8 L1283.7,316.5 L1294.4,312.8 L1304.3,308.7 L1313.6,304.4 L1322.0,299.7 L1329.5,294.7 L1336.1,289.5 L1341.8,284.1 L1346.5,278.5 L1350.2,272.7 L1352.9,266.9 L1354.5,261.0 L1355.0,255.0 L1344.0,318.0 L1343.5,323.9 L1342.0,329.8 L1339.5,335.6 L1336.1,341.3 L1331.7,346.9 L1326.3,352.3 L1320.1,357.4 L1313.1,362.4 L1305.2,367.0 L1296.6,371.4 L1287.2,375.4 L1277.2,379.1 L1266.6,382.4 L1255.5,385.3 L1244.0,387.8 L1232.1,389.8 L1219.8,391.4 L1207.3,392.6 L1194.7,393.3 L1182.0,393.5 L1169.3,393.3 L1156.7,392.6 L1144.2,391.4 L1131.9,389.8 L1120.0,387.8 L1108.5,385.3 L1097.4,382.4 L1086.8,379.1 L1076.8,375.4 L1067.4,371.4 L1058.8,367.0 L1050.9,362.4 L1043.9,357.4 L1037.7,352.3 L1032.3,346.9 L1027.9,341.3 L1024.5,335.6 L1022.0,329.8 L1020.5,323.9 L1020.0,318.0 Z" fill="url(#gShade)"/><path d="M1009.0,255.0 L1009.5,261.0 L1011.1,266.9 L1013.8,272.7 L1017.5,278.5 L1022.2,284.1 L1027.9,289.5 L1034.5,294.7 L1042.0,299.7 L1050.4,304.4 L1059.7,308.7 L1069.6,312.8 L1080.3,316.5 L1091.6,319.8 L1103.5,322.7 L1115.8,325.2 L1128.5,327.3 L1141.6,328.9 L1154.9,330.1 L1168.4,330.8 L1182.0,331.0 L1195.6,330.8 L1209.1,330.1 L1222.4,328.9 L1235.5,327.3 L1248.2,325.2 L1260.5,322.7 L1272.4,319.8 L1283.7,316.5 L1294.4,312.8 L1304.3,308.7 L1313.6,304.4 L1322.0,299.7 L1329.5,294.7 L1336.1,289.5 L1341.8,284.1 L1346.5,278.5 L1350.2,272.7 L1352.9,266.9 L1354.5,261.0 L1355.0,255.0 L1342.0,250.0 L1341.5,254.9 L1340.0,259.7 L1337.6,264.5 L1334.2,269.2 L1329.8,273.7 L1324.6,278.1 L1318.4,282.4 L1311.4,286.4 L1303.7,290.3 L1295.1,293.8 L1285.9,297.1 L1276.0,300.2 L1265.6,302.9 L1254.6,305.2 L1243.2,307.3 L1231.4,309.0 L1219.4,310.3 L1207.0,311.2 L1194.6,311.8 L1182.0,312.0 L1169.4,311.8 L1157.0,311.2 L1144.6,310.3 L1132.6,309.0 L1120.8,307.3 L1109.4,305.2 L1098.4,302.9 L1088.0,300.2 L1078.1,297.1 L1068.9,293.8 L1060.3,290.3 L1052.6,286.4 L1045.6,282.4 L1039.4,278.1 L1034.2,273.7 L1029.8,269.2 L1026.4,264.5 L1024.0,259.7 L1022.5,254.9 L1022.0,250.0 Z" fill="#0c7ec5"/><rect x="1124.0" y="312.5" width="58" height="9" rx="2" fill="#0861a1" transform="rotate(2 1153 317)"/><rect x="1126.0" y="315.5" width="54" height="6" rx="2" fill="#138bcf" transform="rotate(2 1153 317)"/><rect x="1202.0" y="311.5" width="46" height="9" rx="2" fill="#0861a1" transform="rotate(-6 1225 316)"/><rect x="1204.0" y="314.5" width="42" height="6" rx="2" fill="#138bcf" transform="rotate(-6 1225 316)"/><rect x="1045.0" y="292.0" width="36" height="8" rx="2" fill="#0861a1" transform="rotate(24 1063 296)"/><rect x="1047.0" y="295.0" width="32" height="5" rx="2" fill="#138bcf" transform="rotate(24 1063 296)"/><rect x="1270.0" y="292.0" width="40" height="8" rx="2" fill="#0861a1" transform="rotate(-24 1290 296)"/><rect x="1272.0" y="295.0" width="36" height="5" rx="2" fill="#138bcf" transform="rotate(-24 1290 296)"/><rect x="1016.0" y="245.0" width="12" height="10" rx="2" fill="#0861a1" transform="rotate(70 1022 250)"/><rect x="1018.0" y="248.0" width="8" height="7" rx="2" fill="#138bcf" transform="rotate(70 1022 250)"/><rect x="1334.0" y="245.0" width="12" height="10" rx="2" fill="#0861a1" transform="rotate(-70 1340 250)"/><rect x="1336.0" y="248.0" width="8" height="7" rx="2" fill="#138bcf" transform="rotate(-70 1340 250)"/><ellipse cx="1072" cy="353.8" rx="3.4" ry="7.9" fill="#f5f6f8" transform="rotate(-8 1072 353.8)"/><ellipse cx="1195.7" cy="380.9" rx="8" ry="6" fill="#04497e" transform="rotate(0 1195.7 380.9)"/><ellipse cx="1193" cy="380" rx="4" ry="5" fill="#f5f6f8" transform="rotate(0 1193 380)"/><ellipse cx="1286" cy="332" rx="6" ry="5" fill="#04497e" transform="rotate(0 1286 332)"/><ellipse cx="1030" cy="327" rx="2.5" ry="6" fill="#065e9b" transform="rotate(-10 1030 327)"/><ellipse cx="1336" cy="328" rx="2.5" ry="6" fill="#065e9b" transform="rotate(10 1336 328)"/><ellipse cx="1184" cy="230" rx="146.5" ry="58" fill="#0b7ac0"/><ellipse cx="1184" cy="227" rx="136" ry="49" fill="#065f9e"/><path d="M1048.0,227.0 L1048.4,223.2 L1049.7,219.3 L1051.8,215.6 L1054.7,211.9 L1058.4,208.2 L1062.8,204.8 L1068.0,201.4 L1074.0,198.2 L1080.6,195.2 L1087.8,192.4 L1095.7,189.7 L1104.1,187.4 L1112.9,185.2 L1122.3,183.3 L1132.0,181.7 L1142.0,180.4 L1152.3,179.4 L1162.7,178.6 L1173.3,178.2 L1184.0,178.0 L1194.7,178.2 L1205.3,178.6 L1215.7,179.4 L1226.0,180.4 L1236.0,181.7 L1245.7,183.3 L1255.1,185.2 L1263.9,187.4 L1272.3,189.7 L1280.2,192.4 L1287.4,195.2 L1294.0,198.2 L1300.0,201.4 L1305.2,204.8 L1309.6,208.2 L1313.3,211.9 L1316.2,215.6 L1318.3,219.3 L1319.6,223.2 L1320.0,227.0 L1314.0,243.0 L1313.6,239.5 L1312.4,236.1 L1310.4,232.7 L1307.6,229.4 L1304.1,226.2 L1299.8,223.0 L1294.8,220.0 L1289.2,217.1 L1282.9,214.4 L1275.9,211.9 L1268.4,209.5 L1260.4,207.4 L1251.9,205.5 L1243.0,203.8 L1233.7,202.3 L1224.2,201.2 L1214.3,200.2 L1204.3,199.5 L1194.2,199.1 L1184.0,199.0 L1173.8,199.1 L1163.7,199.5 L1153.7,200.2 L1143.8,201.2 L1134.3,202.3 L1125.0,203.8 L1116.1,205.5 L1107.6,207.4 L1099.6,209.5 L1092.1,211.9 L1085.1,214.4 L1078.8,217.1 L1073.2,220.0 L1068.2,223.0 L1063.9,226.2 L1060.4,229.4 L1057.6,232.7 L1055.6,236.1 L1054.4,239.5 L1054.0,243.0 Z" fill="#0d7fc6"/><path d="M1080.0,208.0 L1090.0,205.0 L1094.0,228.0 L1086.0,230.0 Z" fill="#e9f1f8"/><path d="M1060.0,250.0 L1068.0,246.0 L1082.0,262.0 L1074.0,264.0 Z" fill="#e9f1f8"/><path d="M1278.0,206.0 L1290.0,208.0 L1286.0,222.0 Z" fill="#e9f1f8"/><path d="M1262.0,256.0 L1276.0,240.0 L1284.0,246.0 L1270.0,262.0 Z" fill="#e9f1f8"/><path d="M1300.0,250.0 L1312.0,236.0 L1318.0,242.0 L1308.0,256.0 Z" fill="#e9f1f8"/><path d="M1052.0,216.0 L1062.0,214.0 L1092.0,254.0 L1084.0,258.0 Z" fill="#0c7cc2"/><path d="M1088.0,200.0 L1096.0,198.0 L1104.0,236.0 L1098.0,238.0 Z" fill="#0c7cc2"/><path d="M1270.0,210.0 L1282.0,200.0 L1262.0,244.0 L1256.0,240.0 Z" fill="#0c7cc2"/><path d="M1296.0,222.0 L1308.0,218.0 L1290.0,254.0 L1282.0,252.0 Z" fill="#0c7cc2"/><path d="M1037.5,232.0 L1038.0,235.6 L1039.3,239.2 L1041.5,242.7 L1044.7,246.2 L1048.7,249.6 L1053.5,252.9 L1059.1,256.0 L1065.5,259.0 L1072.6,261.9 L1080.4,264.5 L1088.9,267.0 L1097.9,269.2 L1107.5,271.2 L1117.5,273.0 L1127.9,274.5 L1138.7,275.7 L1149.8,276.7 L1161.1,277.4 L1172.5,277.9 L1184.0,278.0 L1195.5,277.9 L1206.9,277.4 L1218.2,276.7 L1229.3,275.7 L1240.1,274.5 L1250.5,273.0 L1260.5,271.2 L1270.1,269.2 L1279.1,267.0 L1287.6,264.5 L1295.4,261.9 L1302.5,259.0 L1308.9,256.0 L1314.5,252.9 L1319.3,249.6 L1323.3,246.2 L1326.5,242.7 L1328.7,239.2 L1330.0,235.6 L1330.5,232.0 L1330.0,258.0 L1329.5,261.9 L1328.2,265.8 L1326.0,269.7 L1322.9,273.5 L1318.9,277.1 L1314.1,280.7 L1308.5,284.1 L1302.1,287.4 L1295.0,290.5 L1287.2,293.4 L1278.8,296.0 L1269.8,298.5 L1260.3,300.6 L1250.3,302.6 L1239.9,304.2 L1229.1,305.6 L1218.1,306.6 L1206.8,307.4 L1195.5,307.8 L1184.0,308.0 L1172.5,307.8 L1161.2,307.4 L1149.9,306.6 L1138.9,305.6 L1128.1,304.2 L1117.7,302.6 L1107.7,300.6 L1098.2,298.5 L1089.2,296.0 L1080.8,293.4 L1073.0,290.5 L1065.9,287.4 L1059.5,284.1 L1053.9,280.7 L1049.1,277.1 L1045.1,273.5 L1042.0,269.7 L1039.8,265.8 L1038.5,261.9 L1038.0,258.0 Z" fill="url(#gRing2)"/><path d="M1037.5,232.0 L1038.0,235.6 L1039.3,239.2 L1041.5,242.7 L1044.7,246.2 L1048.7,249.6 L1053.5,252.9 L1059.1,256.0 L1065.5,259.0 L1072.6,261.9 L1080.4,264.5 L1088.9,267.0 L1097.9,269.2 L1107.5,271.2 L1117.5,273.0 L1127.9,274.5 L1138.7,275.7 L1149.8,276.7 L1161.1,277.4 L1172.5,277.9 L1184.0,278.0 L1195.5,277.9 L1206.9,277.4 L1218.2,276.7 L1229.3,275.7 L1240.1,274.5 L1250.5,273.0 L1260.5,271.2 L1270.1,269.2 L1279.1,267.0 L1287.6,264.5 L1295.4,261.9 L1302.5,259.0 L1308.9,256.0 L1314.5,252.9 L1319.3,249.6 L1323.3,246.2 L1326.5,242.7 L1328.7,239.2 L1330.0,235.6 L1330.5,232.0 L1321.0,229.0 L1320.6,232.1 L1319.3,235.3 L1317.2,238.3 L1314.3,241.4 L1310.6,244.3 L1306.1,247.2 L1300.8,249.9 L1294.8,252.5 L1288.2,255.0 L1280.9,257.3 L1273.0,259.4 L1264.5,261.4 L1255.6,263.1 L1246.2,264.6 L1236.4,266.0 L1226.3,267.0 L1216.0,267.9 L1205.4,268.5 L1194.7,268.9 L1184.0,269.0 L1173.3,268.9 L1162.6,268.5 L1152.0,267.9 L1141.7,267.0 L1131.6,266.0 L1121.8,264.6 L1112.4,263.1 L1103.5,261.4 L1095.0,259.4 L1087.1,257.3 L1079.8,255.0 L1073.2,252.5 L1067.2,249.9 L1061.9,247.2 L1057.4,244.3 L1053.7,241.4 L1050.8,238.3 L1048.7,235.3 L1047.4,232.1 L1047.0,229.0 Z" fill="#1185cb"/><ellipse cx="1088.2" cy="280" rx="6.5" ry="8" fill="#044478" transform="rotate(-10 1088.2 280)"/><ellipse cx="1287.7" cy="280" rx="6" ry="8" fill="#044478" transform="rotate(10 1287.7 280)"/><ellipse cx="1102.9" cy="313.9" rx="8" ry="5" fill="#044478" transform="rotate(0 1102.9 313.9)"/><path d="M1102.9,210.0 L1097.0,235.0 L1092.7,260.0 L1092.3,260.1 L1093.1,261.2 L1094.5,262.3 L1096.4,263.3 L1098.9,264.4 L1101.8,265.4 L1105.3,266.3 L1109.2,267.2 L1113.6,268.1 L1118.4,268.9 L1123.5,269.6 L1129.1,270.3 L1135.0,270.9 L1141.1,271.5 L1147.6,271.9 L1154.2,272.3 L1161.0,272.6 L1167.9,272.8 L1174.9,273.0 L1182.0,273.0 L1189.1,273.0 L1196.1,272.8 L1203.0,272.6 L1209.8,272.3 L1216.4,271.9 L1222.9,271.5 L1229.0,270.9 L1234.9,270.3 L1240.5,269.6 L1245.6,268.9 L1250.4,268.1 L1254.8,267.2 L1258.7,266.3 L1262.2,265.4 L1265.1,264.4 L1267.6,263.3 L1269.5,262.3 L1270.9,261.2 L1271.7,260.1 L1270.8,262.0 L1266.0,235.0 L1261.8,210.0 Z" fill="url(#gCyl)"/><path d="M1100.6,160.0 L1100.6,205.0 L1101.3,206.4 L1102.0,207.8 L1103.3,209.2 L1105.0,210.6 L1107.2,211.9 L1109.9,213.2 L1113.1,214.4 L1116.7,215.6 L1120.6,216.7 L1125.0,217.7 L1129.7,218.7 L1134.8,219.6 L1140.2,220.3 L1145.8,221.0 L1151.6,221.6 L1157.7,222.1 L1163.9,222.5 L1170.2,222.8 L1176.6,222.9 L1183.0,223.0 L1189.4,222.9 L1195.8,222.8 L1202.1,222.5 L1208.3,222.1 L1214.4,221.6 L1220.2,221.0 L1225.8,220.3 L1231.2,219.6 L1236.3,218.7 L1241.0,217.7 L1245.4,216.7 L1249.3,215.6 L1252.9,214.4 L1256.1,213.2 L1258.8,211.9 L1261.0,210.6 L1262.7,209.2 L1264.0,207.8 L1264.7,206.4 L1266.3,205.0 L1266.3,160.0 L1266.5,160.0 L1266.2,158.3 L1265.5,156.6 L1264.2,154.9 L1262.4,153.2 L1260.2,151.6 L1257.5,150.0 L1254.3,148.5 L1250.6,147.1 L1246.6,145.7 L1242.2,144.4 L1237.4,143.3 L1232.3,142.2 L1226.9,141.2 L1221.2,140.4 L1215.3,139.7 L1209.1,139.1 L1202.9,138.6 L1196.5,138.3 L1190.0,138.1 L1183.5,138.0 L1177.0,138.1 L1170.5,138.3 L1164.1,138.6 L1157.9,139.1 L1151.7,139.7 L1145.8,140.4 L1140.1,141.2 L1134.7,142.2 L1129.6,143.3 L1124.8,144.4 L1120.4,145.7 L1116.4,147.1 L1112.7,148.5 L1109.5,150.0 L1106.8,151.6 L1104.6,153.2 L1102.8,154.9 L1101.5,156.6 L1100.8,158.3 L1100.5,160.0 Z" fill="url(#gCyl)"/><path d="M1105.2,209.2 L1106.9,210.6 L1109.1,211.9 L1111.7,213.2 L1114.8,214.4 L1118.3,215.6 L1122.2,216.7 L1126.4,217.7 L1131.0,218.7 L1136.0,219.6 L1141.2,220.3 L1146.7,221.0 L1152.4,221.6 L1158.3,222.1 L1164.3,222.5 L1170.5,222.8 L1176.7,222.9 L1183.0,223.0 L1189.3,222.9 L1195.5,222.8 L1201.7,222.5 L1207.7,222.1 L1213.6,221.6 L1219.3,221.0 L1224.8,220.3 L1230.0,219.6 L1235.0,218.7 L1239.6,217.7 L1243.8,216.7 L1247.7,215.6 L1251.2,214.4 L1254.3,213.2 L1256.9,211.9 L1259.1,210.6 L1260.8,209.2" fill="none" stroke="#065e9b" stroke-width="1.2" opacity="0.7"/><ellipse cx="1184" cy="157.5" rx="69" ry="20" fill="#0f86d2"/><ellipse cx="1184.5" cy="159" rx="62" ry="17" fill="#0b69ad"/><path d="M1128,168 Q1132,160 1150,160 L1162,157 L1172,160 L1196,158 L1222,160 Q1240,161 1243,168 Q1236,176 1186,176.4 Q1136,176 1128,168 Z" fill="#0a3d6c"/><ellipse cx="1170" cy="157.6" rx="5" ry="2" fill="#eef3f8"/><path d="M1100.6,160 h14 L1113.6,201 L1107.6,215 L1101.6,201 Z" fill="#0d7ec4"/><path d="M1108.3,162 L1108.3,205" stroke="#06609e" stroke-width="2.2" opacity="0.75"/><ellipse cx="1107.6" cy="160" rx="7.0" ry="3.4" fill="#1289cd"/><path d="M1252,160 h14 L1265,206 L1259.0,220 L1253,206 Z" fill="#0d7ec4"/><path d="M1259.7,162 L1259.7,210" stroke="#06609e" stroke-width="2.2" opacity="0.75"/><ellipse cx="1259.0" cy="160" rx="7.0" ry="3.4" fill="#1289cd"/><path d="M1188,182 h17 L1204,248 L1196.5,262 L1189,248 Z" fill="#0d7ec4"/><path d="M1197.35,184 L1197.35,252" stroke="#06609e" stroke-width="2.2" opacity="0.75"/><ellipse cx="1196.5" cy="182" rx="8.5" ry="3.4" fill="#1289cd"/><ellipse cx="1158.1" cy="191" rx="8" ry="8" fill="#044478" transform="rotate(0 1158.1 191)"/><ellipse cx="1123.8" cy="196.6" rx="5" ry="7" fill="#044478" transform="rotate(-10 1123.8 196.6)"/><ellipse cx="1241.5" cy="182" rx="4.5" ry="9" fill="#044478" transform="rotate(5 1241.5 182)"/><ellipse cx="1223.5" cy="250.7" rx="7.5" ry="8.5" fill="#044478" transform="rotate(0 1223.5 250.7)"/><ellipse cx="1255" cy="241.7" rx="3" ry="7" fill="#044478" transform="rotate(8 1255 241.7)"/><ellipse cx="1147" cy="253" rx="7" ry="8" fill="#0b76b9"/></g></svg>
<div class="r" style="left:0px;top:569px;width:1920px;height:1px;background:#e3e4e8;"></div>
<div class="r" style="left:0px;top:570px;width:1547px;height:30px;background:#ffffff;"></div>
<div class="r" style="left:1547px;top:570px;width:373px;height:31px;background:#ffffff;"></div>
<div class="r" style="left:0px;top:600px;width:1546px;height:5px;background:#0b6cf9;"></div>
<div class="r" style="left:1546px;top:570px;width:1px;height:390px;background:#dfe0e5;"></div>
<div class="t" style="left:11.50px;top:575.97px;font-size:12.5px;line-height:18px;letter-spacing:0.077px;color:#4a4e6a;">Programming</div>
<div class="r" style="left:132px;top:574px;width:90px;height:20.5px;background:#ebebef;border-radius:4px;box-shadow:inset 0 0 0 1px #dcdce2;"></div>
<div class="t" style="left:139.00px;top:575.97px;font-size:12.5px;line-height:18px;letter-spacing:-0.323px;color:#16182c;">Continue e...</div>
<svg style="left:204px;top:580.5px" width="11" height="8" viewBox="0 0 11 8"><path d="M0 0 H11 L5.5 8 Z" fill="#5d607a"/></svg>
<div class="r" style="left:237.5px;top:577px;width:15.5px;height:15px;background:#f4f4f7;border-radius:2px;box-shadow:inset 0 0 0 1.3px #b9bac6;"></div>
<div class="t" style="left:261.70px;top:576.64px;font-size:12px;line-height:17px;letter-spacing:-0.232px;color:#16182c;">Loop</div>
<div class="r" style="left:292.3px;top:574px;width:77.7px;height:20.5px;background:#ebebef;border-radius:3px;box-shadow:inset 0 0 0 1px #dcdce2;"></div>
<div class="t" style="left:299.30px;top:577.86px;font-size:10.5px;line-height:15px;letter-spacing:0.000px;color:#55586e;">1</div>
<div class="t" style="left:329.00px;top:576.64px;font-size:12px;line-height:17px;letter-spacing:-0.419px;color:#16182c;">Time(s)</div>
<div class="t" style="left:378.30px;top:576.64px;font-size:12px;line-height:17px;letter-spacing:-0.413px;color:#16182c;">(1 Times)</div>
<div class="r" style="left:650px;top:573.5px;width:69px;height:22px;background:#c9cad6;border-radius:3px;"></div>
<svg style="left:664.3px;top:579.5px" width="9" height="10" viewBox="0 0 9 10"><path d="M0.6 0.4 L8.6 5 L0.6 9.6 Z" fill="#3b3f5f" stroke="#3b3f5f" stroke-width="0.8" stroke-linejoin="round"/></svg>
<div class="t" style="left:681.30px;top:576.64px;font-size:12px;line-height:17px;letter-spacing:-0.185px;color:#30334d;">Start</div>
<div class="r" style="left:734.3px;top:573.5px;width:75.4px;height:22px;background:#e4e4ea;border-radius:3px;"></div>
<svg style="left:749.3px;top:579.5px" width="8" height="10" viewBox="0 0 8 10"><path d="M1.2 0.5 V9.5 M6.4 0.5 V9.5" stroke="#8d8fa4" stroke-width="1.9"/></svg>
<div class="t" style="left:765.90px;top:576.64px;font-size:12px;line-height:17px;letter-spacing:-0.781px;color:#888a9e;">Pause</div>
<div class="r" style="left:825px;top:573.5px;width:64px;height:22px;background:#e4e4ea;border-radius:3px;"></div>
<svg style="left:839px;top:579.5px" width="10" height="10" viewBox="0 0 10 10"><rect x="0.4" y="0.6" width="8.8" height="8.6" rx="1.8" fill="#8f91a5"/></svg>
<div class="t" style="left:856.20px;top:576.64px;font-size:12px;line-height:17px;letter-spacing:-0.976px;color:#888a9e;">End</div>
<div class="r" style="left:1194.6px;top:573.5px;width:93.4px;height:22px;background:#c9cad6;border-radius:3px;"></div>
<div class="t" style="left:1203.00px;top:575.97px;font-size:12.5px;line-height:18px;letter-spacing:-0.333px;color:#16182c;">Open template</div>
<div class="r" style="left:1303.3px;top:573.5px;width:91px;height:22px;background:#c9cad6;border-radius:3px;"></div>
<div class="t" style="left:1311.00px;top:575.97px;font-size:12.5px;line-height:18px;letter-spacing:-0.513px;color:#16182c;">Save Template</div>
<div class="t" style="left:1443.60px;top:576.64px;font-size:12px;line-height:17px;letter-spacing:-0.054px;color:#16182c;">(55/55)</div>
<div class="t" style="left:1491.40px;top:576.64px;font-size:12px;line-height:17px;letter-spacing:-0.387px;color:#16182c;">00:08:24</div>
<div class="t" style="left:1555.70px;top:577.64px;font-size:12px;line-height:17px;letter-spacing:-0.099px;color:#4a4e6a;">parameters</div>
<div class="r" style="left:0;top:605px;width:1546px;height:355px;overflow:hidden;"><svg style="left:0;top:-605px" width="1546" height="1020" viewBox="0 0 1546 1020"><path d="M1037,674.3 L86,758.6" fill="none" stroke="#9294aa" stroke-width="1.6" stroke-linecap="round"/><path d="M1560,830.2 L713,855" fill="none" stroke="#9294aa" stroke-width="1.6" stroke-linecap="round"/><path d="M1298,895 L270,918" fill="none" stroke="#9294aa" stroke-width="1.6" stroke-linecap="round"/><path d="M1281,895.4 L1299,895" fill="none" stroke="#9294aa" stroke-width="1.6" stroke-linecap="round"/><path d="M393,647.4 L435,647.4" fill="none" stroke="#8e90a6" stroke-width="1.7" stroke-linecap="round"/><path d="M683,647.4 L744.5,647.4" fill="none" stroke="#8e90a6" stroke-width="1.7" stroke-linecap="round"/><path d="M992.5,647.4 L1038,647.4" fill="none" stroke="#8e90a6" stroke-width="1.7" stroke-linecap="round"/><path d="M711,797.4 L759,797.4" fill="none" stroke="#8e90a6" stroke-width="1.7" stroke-linecap="round"/><path d="M1017,797.4 L1039,797.4" fill="none" stroke="#8e90a6" stroke-width="1.7" stroke-linecap="round"/><path d="M1287,797.4 L1303,797.4" fill="none" stroke="#8e90a6" stroke-width="1.7" stroke-linecap="round"/><path d="M713,863.5 L761,863.5" fill="none" stroke="#8e90a6" stroke-width="1.7" stroke-linecap="round"/><path d="M1019,863.5 L1034,863.5" fill="none" stroke="#8e90a6" stroke-width="1.7" stroke-linecap="round"/><path d="M1282,863.5 L1298,863.5" fill="none" stroke="#8e90a6" stroke-width="1.7" stroke-linecap="round"/><path d="M285.3,767.4 C438,767.4 310,797.3 462.5,797.3" fill="none" stroke="#9294aa" stroke-width="1.5" stroke-linecap="round"/><path d="M271,924.4 C335,924.4 348,938 358,964" fill="none" stroke="#9294aa" stroke-width="1.5" stroke-linecap="round"/><path d="M1290,646.2 L1301.5,648 L1290,648.9 Z" fill="#8d8fa5"/><path d="M37,766.3 L21.5,767.3 L37,768.6 Z" fill="#8d8fa5"/><path d="M465,862.9 L453,863.4 L465,864.4 Z" fill="#8d8fa5"/><path d="M23,923.6 L11.5,924.2 L23,925.4 Z" fill="#8d8fa5"/></svg>
<div class="r" style="left:146.0px;top:32.7px;width:246.2px;height:43px;background:#ececee;border-radius:4px;box-shadow:0 0 0 1px #d3d4d9, 0 0.5px 3px rgba(60,60,90,0.24);"></div>
<div class="r" style="left:146.3px;top:69.8px;width:245.6px;height:3.6px;background:#05dba6;"></div>
<div class="t" style="left:173.4px;top:42.48px;font-size:14.5px;line-height:20px;-webkit-text-stroke:0.5px #3d4162;letter-spacing:0.294px;color:#3d4162;">New Project Group</div>
<div class="r" style="left:435.7px;top:32.7px;width:246.3px;height:43px;background:#ececee;border-radius:4px;box-shadow:0 0 0 1px #d3d4d9, 0 0.5px 3px rgba(60,60,90,0.24);"></div>
<div class="r" style="left:436.0px;top:69.8px;width:245.7px;height:3.6px;background:#05dba6;"></div>
<div class="t" style="left:463.1px;top:42.48px;font-size:14.5px;line-height:20px;-webkit-text-stroke:0.5px #3d4162;letter-spacing:0.162px;color:#3d4162;">Scan Setting</div>
<div class="r" style="left:745.0px;top:32.7px;width:246.3px;height:43px;background:#ececee;border-radius:4px;box-shadow:0 0 0 1px #d3d4d9, 0 0.5px 3px rgba(60,60,90,0.24);"></div>
<div class="r" style="left:745.3px;top:69.8px;width:245.7px;height:3.6px;background:#05dba6;"></div>
<div class="t" style="left:772.4px;top:42.48px;font-size:14.5px;line-height:20px;-webkit-text-stroke:0.5px #3d4162;letter-spacing:0.162px;color:#3d4162;">Scan Setting</div>
<div class="r" style="left:1038.5px;top:32.7px;width:246.3px;height:43px;background:#ececee;border-radius:4px;box-shadow:0 0 0 1px #d3d4d9, 0 0.5px 3px rgba(60,60,90,0.24);"></div>
<div class="r" style="left:1038.8px;top:69.8px;width:245.7px;height:3.6px;background:#05dba6;"></div>
<div class="t" style="left:1065.9px;top:42.48px;font-size:14.5px;line-height:20px;-webkit-text-stroke:0.5px #3d4162;letter-spacing:0.281px;color:#3d4162;">Camera settings</div>
<div class="r" style="left:37.8px;top:152.9px;width:246.2px;height:43px;background:#ececee;border-radius:4px;box-shadow:0 0 0 1px #d3d4d9, 0 0.5px 3px rgba(60,60,90,0.24);"></div>
<div class="r" style="left:38.1px;top:190.0px;width:245.6px;height:3.6px;background:#05dba6;"></div>
<div class="t" style="left:65.2px;top:162.68px;font-size:14.5px;line-height:20px;-webkit-text-stroke:0.5px #3d4162;letter-spacing:0.347px;color:#3d4162;">Joint Motion</div>
<div class="r" style="left:463.6px;top:182.7px;width:246.3px;height:43px;background:#ececee;border-radius:4px;box-shadow:0 0 0 1px #d3d4d9, 0 0.5px 3px rgba(60,60,90,0.24);"></div>
<div class="r" style="left:463.9px;top:219.8px;width:245.7px;height:3.6px;background:#05dba6;"></div>
<div class="t" style="left:491.0px;top:192.48px;font-size:14.5px;line-height:20px;-webkit-text-stroke:0.5px #3d4162;letter-spacing:0.523px;color:#3d4162;">Turntable Move</div>
<div class="r" style="left:759.9px;top:182.7px;width:256.3px;height:43px;background:#ececee;border-radius:4px;box-shadow:0 0 0 1px #d3d4d9, 0 0.5px 3px rgba(60,60,90,0.24);"></div>
<div class="r" style="left:760.2px;top:219.8px;width:255.7px;height:3.6px;background:#05dba6;"></div>
<div class="t" style="left:787.3px;top:192.48px;font-size:14.5px;line-height:20px;-webkit-text-stroke:0.5px #3d4162;letter-spacing:0.122px;color:#3d4162;">Start Scan</div>
<div class="r" style="left:1039.7px;top:182.7px;width:246.3px;height:43px;background:#ececee;border-radius:4px;box-shadow:0 0 0 1px #d3d4d9, 0 0.5px 3px rgba(60,60,90,0.24);"></div>
<div class="r" style="left:1040.0px;top:219.8px;width:245.7px;height:3.6px;background:#05dba6;"></div>
<div class="t" style="left:1067.1px;top:192.48px;font-size:14.5px;line-height:20px;-webkit-text-stroke:0.5px #3d4162;letter-spacing:0.523px;color:#3d4162;">Turntable Move</div>
<div class="r" style="left:1303.8px;top:182.7px;width:256.3px;height:43px;background:#ececee;border-radius:4px;box-shadow:0 0 0 1px #d3d4d9, 0 0.5px 3px rgba(60,60,90,0.24);"></div>
<div class="r" style="left:1304.1px;top:219.8px;width:255.7px;height:3.6px;background:#05dba6;"></div>
<div class="t" style="left:1331.2px;top:192.48px;font-size:14.5px;line-height:20px;-webkit-text-stroke:0.5px #3d4162;letter-spacing:0.122px;color:#3d4162;">Start Scan</div>
<div class="r" style="left:465.8px;top:248.7px;width:246.3px;height:43px;background:#ececee;border-radius:4px;box-shadow:0 0 0 1.2px #3d8df7;"></div>
<div class="r" style="left:466.1px;top:285.8px;width:245.7px;height:3.6px;background:#05dba6;"></div>
<div class="t" style="left:493.2px;top:258.48px;font-size:14.5px;line-height:20px;-webkit-text-stroke:0.5px #3d4162;letter-spacing:0.523px;color:#3d4162;">Turntable Move</div>
<div class="r" style="left:761.8px;top:248.7px;width:256.3px;height:43px;background:#ececee;border-radius:4px;box-shadow:0 0 0 1px #d3d4d9, 0 0.5px 3px rgba(60,60,90,0.24);"></div>
<div class="r" style="left:762.1px;top:285.8px;width:255.7px;height:3.6px;background:#05dba6;"></div>
<div class="t" style="left:789.2px;top:258.48px;font-size:14.5px;line-height:20px;-webkit-text-stroke:0.5px #3d4162;letter-spacing:0.122px;color:#3d4162;">Start Scan</div>
<div class="r" style="left:1034.7px;top:248.7px;width:246.3px;height:43px;background:#ececee;border-radius:4px;box-shadow:0 0 0 1px #d3d4d9, 0 0.5px 3px rgba(60,60,90,0.24);"></div>
<div class="r" style="left:1035.0px;top:285.8px;width:245.7px;height:3.6px;background:#05dba6;"></div>
<div class="t" style="left:1062.1px;top:258.48px;font-size:14.5px;line-height:20px;-webkit-text-stroke:0.5px #3d4162;letter-spacing:0.523px;color:#3d4162;">Turntable Move</div>
<div class="r" style="left:1299.0px;top:248.7px;width:256.3px;height:43px;background:#ececee;border-radius:4px;box-shadow:0 0 0 1px #d3d4d9, 0 0.5px 3px rgba(60,60,90,0.24);"></div>
<div class="r" style="left:1299.3px;top:285.8px;width:255.7px;height:3.6px;background:#05dba6;"></div>
<div class="t" style="left:1326.4px;top:258.48px;font-size:14.5px;line-height:20px;-webkit-text-stroke:0.5px #3d4162;letter-spacing:0.122px;color:#3d4162;">Start Scan</div>
<div class="r" style="left:23.8px;top:310.7px;width:246.2px;height:43px;background:#ececee;border-radius:4px;box-shadow:0 0 0 1px #d3d4d9, 0 0.5px 3px rgba(60,60,90,0.24);"></div>
<div class="r" style="left:24.1px;top:347.8px;width:245.6px;height:3.6px;background:#05dba6;"></div>
<div class="t" style="left:51.2px;top:320.48px;font-size:14.5px;line-height:20px;-webkit-text-stroke:0.5px #3d4162;letter-spacing:0.347px;color:#3d4162;">Joint Motion</div>
<svg style="left:0;top:-605px" width="1546" height="1020" viewBox="0 0 1546 1020"><path d="M157.3,655.8 l3.9,3.9 l3.9,-3.9" fill="none" stroke="#4a4e6c" stroke-width="1.3" stroke-linecap="round" stroke-linejoin="round"/><path d="M330.3,656.6 a6.5,6.5 0 0 1 11.6,-1.6" fill="none" stroke="#3b3f5f" stroke-width="1.7" stroke-linecap="round"/><path d="M344.1,652.0 l0.1,5.4 l-5.4,-0.4 Z" fill="#3b3f5f" stroke="#3b3f5f" stroke-width="0.6" stroke-linejoin="round"/><circle cx="336.4" cy="660.7" r="2.6" fill="#585c7a"/><circle cx="373.0" cy="657.4" r="6" fill="none" stroke="#3b3f5f" stroke-width="2"/><circle cx="145.2" cy="647.4" r="3.9" fill="#ffffff" stroke="#4d5170" stroke-width="1.9"/><circle cx="393.0" cy="647.4" r="3.9" fill="#ffffff" stroke="#4d5170" stroke-width="1.9"/><path d="M447.0,655.8 l3.9,3.9 l3.9,-3.9" fill="none" stroke="#4a4e6c" stroke-width="1.3" stroke-linecap="round" stroke-linejoin="round"/><path d="M620.1,656.6 a6.5,6.5 0 0 1 11.6,-1.6" fill="none" stroke="#3b3f5f" stroke-width="1.7" stroke-linecap="round"/><path d="M633.9,652.0 l0.1,5.4 l-5.4,-0.4 Z" fill="#3b3f5f" stroke="#3b3f5f" stroke-width="0.6" stroke-linejoin="round"/><circle cx="626.2" cy="660.7" r="2.6" fill="#585c7a"/><circle cx="662.8" cy="657.4" r="6" fill="none" stroke="#3b3f5f" stroke-width="2"/><circle cx="434.9" cy="647.4" r="3.9" fill="#ffffff" stroke="#4d5170" stroke-width="1.9"/><circle cx="682.8" cy="647.4" r="3.9" fill="#ffffff" stroke="#4d5170" stroke-width="1.9"/><path d="M756.3,655.8 l3.9,3.9 l3.9,-3.9" fill="none" stroke="#4a4e6c" stroke-width="1.3" stroke-linecap="round" stroke-linejoin="round"/><path d="M929.4,656.6 a6.5,6.5 0 0 1 11.6,-1.6" fill="none" stroke="#3b3f5f" stroke-width="1.7" stroke-linecap="round"/><path d="M943.2,652.0 l0.1,5.4 l-5.4,-0.4 Z" fill="#3b3f5f" stroke="#3b3f5f" stroke-width="0.6" stroke-linejoin="round"/><circle cx="935.5" cy="660.7" r="2.6" fill="#585c7a"/><circle cx="972.1" cy="657.4" r="6" fill="none" stroke="#3b3f5f" stroke-width="2"/><circle cx="744.2" cy="647.4" r="3.9" fill="#ffffff" stroke="#4d5170" stroke-width="1.9"/><circle cx="992.1" cy="647.4" r="3.9" fill="#ffffff" stroke="#4d5170" stroke-width="1.9"/><path d="M1049.8,655.8 l3.9,3.9 l3.9,-3.9" fill="none" stroke="#4a4e6c" stroke-width="1.3" stroke-linecap="round" stroke-linejoin="round"/><path d="M1222.9,656.6 a6.5,6.5 0 0 1 11.6,-1.6" fill="none" stroke="#3b3f5f" stroke-width="1.7" stroke-linecap="round"/><path d="M1236.7,652.0 l0.1,5.4 l-5.4,-0.4 Z" fill="#3b3f5f" stroke="#3b3f5f" stroke-width="0.6" stroke-linejoin="round"/><circle cx="1229.0" cy="660.7" r="2.6" fill="#585c7a"/><circle cx="1265.6" cy="657.4" r="6" fill="none" stroke="#3b3f5f" stroke-width="2"/><circle cx="1037.7" cy="647.4" r="3.9" fill="#ffffff" stroke="#4d5170" stroke-width="1.9"/><circle cx="1285.6" cy="647.4" r="3.9" fill="#ffffff" stroke="#4d5170" stroke-width="1.9"/><path d="M49.1,776.0 l3.9,3.9 l3.9,-3.9" fill="none" stroke="#4a4e6c" stroke-width="1.3" stroke-linecap="round" stroke-linejoin="round"/><path d="M222.1,776.8 a6.5,6.5 0 0 1 11.6,-1.6" fill="none" stroke="#3b3f5f" stroke-width="1.7" stroke-linecap="round"/><path d="M235.9,772.2 l0.1,5.4 l-5.4,-0.4 Z" fill="#3b3f5f" stroke="#3b3f5f" stroke-width="0.6" stroke-linejoin="round"/><circle cx="228.2" cy="780.9" r="2.6" fill="#585c7a"/><circle cx="264.8" cy="777.6" r="6" fill="none" stroke="#3b3f5f" stroke-width="2"/><circle cx="37.0" cy="767.6" r="3.9" fill="#ffffff" stroke="#4d5170" stroke-width="1.9"/><circle cx="284.8" cy="767.6" r="3.9" fill="#ffffff" stroke="#4d5170" stroke-width="1.9"/><path d="M474.9,805.8 l3.9,3.9 l3.9,-3.9" fill="none" stroke="#4a4e6c" stroke-width="1.3" stroke-linecap="round" stroke-linejoin="round"/><path d="M648.0,806.6 a6.5,6.5 0 0 1 11.6,-1.6" fill="none" stroke="#3b3f5f" stroke-width="1.7" stroke-linecap="round"/><path d="M661.8,802.0 l0.1,5.4 l-5.4,-0.4 Z" fill="#3b3f5f" stroke="#3b3f5f" stroke-width="0.6" stroke-linejoin="round"/><circle cx="654.1" cy="810.7" r="2.6" fill="#585c7a"/><circle cx="690.7" cy="807.4" r="6" fill="none" stroke="#3b3f5f" stroke-width="2"/><circle cx="462.8" cy="797.4" r="3.9" fill="#ffffff" stroke="#4d5170" stroke-width="1.9"/><circle cx="710.7" cy="797.4" r="3.9" fill="#ffffff" stroke="#4d5170" stroke-width="1.9"/><path d="M771.2,805.8 l3.9,3.9 l3.9,-3.9" fill="none" stroke="#4a4e6c" stroke-width="1.3" stroke-linecap="round" stroke-linejoin="round"/><path d="M954.3,806.6 a6.5,6.5 0 0 1 11.6,-1.6" fill="none" stroke="#3b3f5f" stroke-width="1.7" stroke-linecap="round"/><path d="M968.1,802.0 l0.1,5.4 l-5.4,-0.4 Z" fill="#3b3f5f" stroke="#3b3f5f" stroke-width="0.6" stroke-linejoin="round"/><circle cx="960.4" cy="810.7" r="2.6" fill="#585c7a"/><circle cx="997.0" cy="807.4" r="6" fill="none" stroke="#3b3f5f" stroke-width="2"/><circle cx="759.1" cy="797.4" r="3.9" fill="#ffffff" stroke="#4d5170" stroke-width="1.9"/><circle cx="1017.0" cy="797.4" r="3.9" fill="#ffffff" stroke="#4d5170" stroke-width="1.9"/><path d="M1051.0,805.8 l3.9,3.9 l3.9,-3.9" fill="none" stroke="#4a4e6c" stroke-width="1.3" stroke-linecap="round" stroke-linejoin="round"/><path d="M1224.1,806.6 a6.5,6.5 0 0 1 11.6,-1.6" fill="none" stroke="#3b3f5f" stroke-width="1.7" stroke-linecap="round"/><path d="M1237.9,802.0 l0.1,5.4 l-5.4,-0.4 Z" fill="#3b3f5f" stroke="#3b3f5f" stroke-width="0.6" stroke-linejoin="round"/><circle cx="1230.2" cy="810.7" r="2.6" fill="#585c7a"/><circle cx="1266.8" cy="807.4" r="6" fill="none" stroke="#3b3f5f" stroke-width="2"/><circle cx="1038.9" cy="797.4" r="3.9" fill="#ffffff" stroke="#4d5170" stroke-width="1.9"/><circle cx="1286.8" cy="797.4" r="3.9" fill="#ffffff" stroke="#4d5170" stroke-width="1.9"/><path d="M1315.1,805.8 l3.9,3.9 l3.9,-3.9" fill="none" stroke="#4a4e6c" stroke-width="1.3" stroke-linecap="round" stroke-linejoin="round"/><path d="M1498.2,806.6 a6.5,6.5 0 0 1 11.6,-1.6" fill="none" stroke="#3b3f5f" stroke-width="1.7" stroke-linecap="round"/><path d="M1512.0,802.0 l0.1,5.4 l-5.4,-0.4 Z" fill="#3b3f5f" stroke="#3b3f5f" stroke-width="0.6" stroke-linejoin="round"/><circle cx="1504.3" cy="810.7" r="2.6" fill="#585c7a"/><circle cx="1540.9" cy="807.4" r="6" fill="none" stroke="#3b3f5f" stroke-width="2"/><circle cx="1303.0" cy="797.4" r="3.9" fill="#ffffff" stroke="#4d5170" stroke-width="1.9"/><circle cx="1560.9" cy="797.4" r="3.9" fill="#ffffff" stroke="#4d5170" stroke-width="1.9"/><path d="M477.1,871.8 l3.9,3.9 l3.9,-3.9" fill="none" stroke="#4a4e6c" stroke-width="1.3" stroke-linecap="round" stroke-linejoin="round"/><path d="M650.2,872.6 a6.5,6.5 0 0 1 11.6,-1.6" fill="none" stroke="#3b3f5f" stroke-width="1.7" stroke-linecap="round"/><path d="M664.0,868.0 l0.1,5.4 l-5.4,-0.4 Z" fill="#3b3f5f" stroke="#3b3f5f" stroke-width="0.6" stroke-linejoin="round"/><circle cx="656.3" cy="876.7" r="2.6" fill="#585c7a"/><circle cx="692.9" cy="873.4" r="6" fill="none" stroke="#3b3f5f" stroke-width="2"/><circle cx="465.0" cy="863.4" r="3.9" fill="#ffffff" stroke="#4d5170" stroke-width="1.9"/><circle cx="712.9" cy="863.4" r="3.9" fill="#ffffff" stroke="#4d5170" stroke-width="1.9"/><path d="M773.1,871.8 l3.9,3.9 l3.9,-3.9" fill="none" stroke="#4a4e6c" stroke-width="1.3" stroke-linecap="round" stroke-linejoin="round"/><path d="M956.2,872.6 a6.5,6.5 0 0 1 11.6,-1.6" fill="none" stroke="#3b3f5f" stroke-width="1.7" stroke-linecap="round"/><path d="M970.0,868.0 l0.1,5.4 l-5.4,-0.4 Z" fill="#3b3f5f" stroke="#3b3f5f" stroke-width="0.6" stroke-linejoin="round"/><circle cx="962.3" cy="876.7" r="2.6" fill="#585c7a"/><circle cx="998.9" cy="873.4" r="6" fill="none" stroke="#3b3f5f" stroke-width="2"/><circle cx="761.0" cy="863.4" r="3.9" fill="#ffffff" stroke="#4d5170" stroke-width="1.9"/><circle cx="1018.9" cy="863.4" r="3.9" fill="#ffffff" stroke="#4d5170" stroke-width="1.9"/><path d="M1046.0,871.8 l3.9,3.9 l3.9,-3.9" fill="none" stroke="#4a4e6c" stroke-width="1.3" stroke-linecap="round" stroke-linejoin="round"/><path d="M1219.1,872.6 a6.5,6.5 0 0 1 11.6,-1.6" fill="none" stroke="#3b3f5f" stroke-width="1.7" stroke-linecap="round"/><path d="M1232.9,868.0 l0.1,5.4 l-5.4,-0.4 Z" fill="#3b3f5f" stroke="#3b3f5f" stroke-width="0.6" stroke-linejoin="round"/><circle cx="1225.2" cy="876.7" r="2.6" fill="#585c7a"/><circle cx="1261.8" cy="873.4" r="6" fill="none" stroke="#3b3f5f" stroke-width="2"/><circle cx="1033.9" cy="863.4" r="3.9" fill="#ffffff" stroke="#4d5170" stroke-width="1.9"/><circle cx="1281.8" cy="863.4" r="3.9" fill="#ffffff" stroke="#4d5170" stroke-width="1.9"/><path d="M1310.3,871.8 l3.9,3.9 l3.9,-3.9" fill="none" stroke="#4a4e6c" stroke-width="1.3" stroke-linecap="round" stroke-linejoin="round"/><path d="M1493.4,872.6 a6.5,6.5 0 0 1 11.6,-1.6" fill="none" stroke="#3b3f5f" stroke-width="1.7" stroke-linecap="round"/><path d="M1507.2,868.0 l0.1,5.4 l-5.4,-0.4 Z" fill="#3b3f5f" stroke="#3b3f5f" stroke-width="0.6" stroke-linejoin="round"/><circle cx="1499.5" cy="876.7" r="2.6" fill="#585c7a"/><circle cx="1536.1" cy="873.4" r="6" fill="none" stroke="#3b3f5f" stroke-width="2"/><circle cx="1298.2" cy="863.4" r="3.9" fill="#ffffff" stroke="#4d5170" stroke-width="1.9"/><circle cx="1556.1" cy="863.4" r="3.9" fill="#ffffff" stroke="#4d5170" stroke-width="1.9"/><path d="M35.1,933.8 l3.9,3.9 l3.9,-3.9" fill="none" stroke="#4a4e6c" stroke-width="1.3" stroke-linecap="round" stroke-linejoin="round"/><path d="M208.1,934.6 a6.5,6.5 0 0 1 11.6,-1.6" fill="none" stroke="#3b3f5f" stroke-width="1.7" stroke-linecap="round"/><path d="M221.9,930.0 l0.1,5.4 l-5.4,-0.4 Z" fill="#3b3f5f" stroke="#3b3f5f" stroke-width="0.6" stroke-linejoin="round"/><circle cx="214.2" cy="938.7" r="2.6" fill="#585c7a"/><circle cx="250.8" cy="935.4" r="6" fill="none" stroke="#3b3f5f" stroke-width="2"/><circle cx="23.0" cy="925.4" r="3.9" fill="#ffffff" stroke="#4d5170" stroke-width="1.9"/><circle cx="270.8" cy="925.4" r="3.9" fill="#ffffff" stroke="#4d5170" stroke-width="1.9"/></svg>
<div class="r" style="left:1537.6px;top:3px;width:6.2px;height:153px;background:#c9c9cc;border-radius:3px;"></div>
</div>
<div class="r" style="left:0px;top:960px;width:1920px;height:60px;background:#fbfbfb;"></div>
<div class="r" style="left:0;top:960px;width:1920px;height:60px;overflow:hidden;">
<div class="t" style="left:0.30px;top:-7.70px;font-size:13px;line-height:18px;letter-spacing:0.038px;color:#2c2f48;">2025-10-23 09:47:03</div>
<div class="t" style="left:130.00px;top:-7.70px;font-size:13px;line-height:18px;letter-spacing:-0.351px;color:#1a6fe8;font-weight:bold;">INFO</div>
<div class="t" style="left:178.30px;top:-7.70px;font-size:13px;line-height:18px;letter-spacing:0.095px;color:#2c2f48;">Joint MotionSucceed</div>
<div class="t" style="left:0.30px;top:13.20px;font-size:13px;line-height:18px;letter-spacing:0.038px;color:#2c2f48;">2025-10-23 09:47:03</div>
<div class="t" style="left:130.00px;top:13.20px;font-size:13px;line-height:18px;letter-spacing:-0.351px;color:#1a6fe8;font-weight:bold;">INFO</div>
<div class="t" style="left:178.30px;top:13.20px;font-size:13px;line-height:18px;letter-spacing:0.002px;color:#2c2f48;">End scanStart Execution</div>
<div class="t" style="left:0.30px;top:34.10px;font-size:13px;line-height:18px;letter-spacing:0.038px;color:#2c2f48;">2025-10-23 09:47:03</div>
<div class="t" style="left:130.00px;top:34.10px;font-size:13px;line-height:18px;letter-spacing:-0.351px;color:#1a6fe8;font-weight:bold;">INFO</div>
<div class="t" style="left:178.30px;top:34.10px;font-size:13px;line-height:18px;letter-spacing:-0.028px;color:#2c2f48;">End scanSucceed</div>
<div class="t" style="left:0.30px;top:55.00px;font-size:13px;line-height:18px;letter-spacing:0.038px;color:#2c2f48;">2025-10-23 09:47:03</div>
<div class="t" style="left:130.00px;top:55.00px;font-size:13px;line-height:18px;letter-spacing:-0.351px;color:#1a6fe8;font-weight:bold;">INFO</div>
<div class="t" style="left:178.30px;top:55.00px;font-size:13px;line-height:18px;letter-spacing:-0.232px;color:#2c2f48;">Mesh Optimization Start Execution</div>
</div>
<svg style="left:1897.5px;top:970.5px" width="15" height="11" viewBox="0 0 15 11"><rect x="0.8" y="0.8" width="13" height="9.2" rx="2" fill="#fdfdfe" stroke="#4a4e6c" stroke-width="1.3"/><rect x="2.6" y="5.6" width="5.6" height="3" fill="#3b3f5f"/></svg>
</body></html>
